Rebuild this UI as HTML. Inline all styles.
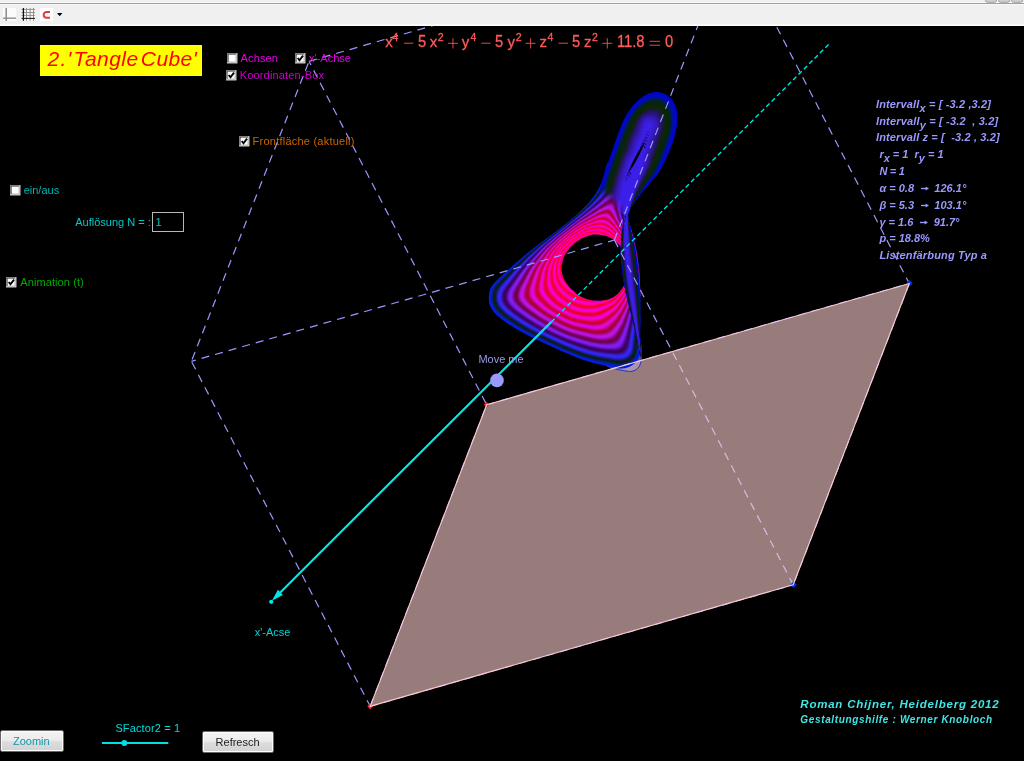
<!DOCTYPE html>
<html><head><meta charset="utf-8"><title>Tangle Cube</title>
<style>
html,body{margin:0;padding:0;background:#000;overflow:hidden}
body{width:1024px;height:761px;position:relative;font-family:"Liberation Sans",sans-serif;font-size:11px}
#tb{position:absolute;left:0;top:0;width:1024px;height:26px;z-index:5}
#view{position:absolute;left:0;top:0;width:1024px;height:761px;background:#000;overflow:hidden}
#gfx{position:absolute;left:0;top:0}
.t{position:absolute;white-space:nowrap;line-height:1;margin:0;padding:0}
.cb{position:absolute;width:11px;height:11px;box-sizing:border-box;background:#fff;border:1px solid;border-color:#808080 #f0f0f0 #f0f0f0 #808080;box-shadow:inset 1px 1px 0 #404040, inset -1px -1px 0 #d4d0c8}
.cb svg{position:absolute;left:1px;top:1px}
.btn{position:absolute;box-sizing:border-box;border:1px solid #686868;border-radius:2px;background:linear-gradient(#f4f4f4 0%,#ececec 45%,#dcdcdc 55%,#d2d2d2 100%);box-shadow:inset 0 0 0 1px #fcfcfc;text-align:center}
.bi{font-weight:bold;font-style:italic;color:#9999ff}
sub{font-size:11px;vertical-align:baseline;position:relative;top:4.3px}

#txt{position:absolute;left:0;top:0;width:1024px;height:761px;will-change:transform;background:transparent}

</style></head>
<body>
<div id="tb"><svg width="1024" height="26" style="position:absolute;left:0;top:0">
<rect x="0" y="0" width="1024" height="26" fill="#f0f0f0"/>
<rect x="0" y="2" width="1024" height="3" fill="#f8f8f8"/><rect x="0" y="3" width="1024" height="1" fill="#a0a0a0"/>
<rect x="0" y="24.4" width="1024" height="1.6" fill="#fdfdfd"/>
<rect x="3" y="8" width="13" height="13" fill="#fbfbfb"/>
<rect x="5.5" y="8" width="1.4" height="13" fill="#8a8080"/>
<rect x="3" y="17.5" width="13" height="1.3" fill="#8a8585"/>
<rect x="21.5" y="8" width="13.5" height="13" fill="#f8f8f8"/>
<g stroke="#888" stroke-width="0.9">
<line x1="26.5" y1="8" x2="26.5" y2="20.8"/><line x1="30.1" y1="8" x2="30.1" y2="20.8"/><line x1="33.5" y1="8" x2="33.5" y2="20.8"/>
<line x1="21.5" y1="9.4" x2="35" y2="9.4"/><line x1="21.5" y1="12.5" x2="35" y2="12.5"/><line x1="21.5" y1="15.4" x2="35" y2="15.4"/>
</g>
<line x1="23.4" y1="8" x2="23.4" y2="20.8" stroke="#101010" stroke-width="1.3"/>
<line x1="21.5" y1="18.4" x2="35" y2="18.4" stroke="#202020" stroke-width="1.1"/>
<rect x="40" y="8" width="13" height="13" fill="#fff"/>
<path d="M50,11.9 L46.6,11.9 A2.9,2.9 0 0 0 46.6,17.7 L50,17.7" fill="none" stroke="#e83a3a" stroke-width="2.0"/>
<polygon points="57,13 62.4,13 59.7,16.2" fill="#000"/>
<g fill="#d0d0d0" stroke="#909090" stroke-width="0.8"><rect x="985.5" y="-3" width="11" height="5.3" rx="2"/><rect x="998.6" y="-3" width="11" height="5.3" rx="2"/><rect x="1011.6" y="-3" width="11" height="5.3" rx="2"/></g>
</svg>
</div>
<div id="view">
<svg id="gfx" width="1024" height="761" viewBox="0 0 1024 761">
<polygon points="486.7,404.8 909.3,283.5 793.2,584.8 370.2,706.3" fill="#987b7b"/>
<defs><radialGradient id="fade" gradientUnits="userSpaceOnUse" cx="600" cy="211" r="27"><stop offset="0" stop-color="#000"/><stop offset="0.35" stop-color="#000"/><stop offset="1" stop-color="#fff"/></radialGradient><filter id="bl" filterUnits="userSpaceOnUse" x="458" y="44" width="254" height="356"><feGaussianBlur stdDeviation="3"/></filter><mask id="cm" maskUnits="userSpaceOnUse" x="478" y="84" width="214" height="296"><polygon points="560,60 700,60 700,372 634,372 632,365 629,349 625,334 621,317 617,300 614,285 612,270 611,256 611,243 613,232 617,225 622.5,217 621,208 614,199 603,191 585,179 560,170" fill="#fff" filter="url(#bl)"/></mask></defs>
<path d="M607,366.2 C614,368.6 622,370.8 629.5,371.5 C636,371.6 641.3,367 641.4,358 L641,345 L636,352 Z" fill="#c8b4dc" fill-opacity="0.45" stroke="#1c30d8" stroke-width="1"/>
<g id="ring" fill-rule="evenodd">
<path d="M622.5,368.5 618.8,368.5 610.0,366.8 591.7,362.5 582.1,359.5 563.2,351.8 543.9,343.0 526.4,334.5 516.5,329.0 509.2,324.5 504.4,321.2 497.5,315.8 493.8,312.0 490.8,307.6 489.2,303.5 488.7,298.5 489.2,292.5 490.5,288.6 492.2,285.4 495.9,281.2 514.5,264.2 525.2,255.0 538.2,244.8 555.2,232.3 570.8,220.1 579.0,212.8 588.3,203.5 594.7,195.5 597.9,190.2 600.0,186.2 603.6,177.0 606.0,167.1 607.8,162.7 611.2,159.2 614.2,157.8 618.5,156.7 622.0,156.4 627.0,156.7 632.4,158.2 636.8,160.2 641.3,163.0 646.8,167.2 649.2,169.8 651.8,173.6 652.5,177.0 651.8,180.0 650.2,182.5 646.5,187.3 641.9,192.2 632.5,204.2 629.7,209.0 628.2,214.0 628.2,217.5 628.8,220.5 634.8,242.6 636.5,251.0 638.5,263.8 639.5,273.0 640.3,291.2 640.1,316.5 640.4,318.2 640.1,337.0 640.5,345.0 640.5,352.0 640.0,354.8 638.8,358.0 637.5,360.3 635.0,363.0 632.2,365.2 629.0,366.9 624.8,368.2Z" fill="#001ee6"/>
<path d="M622.0,368.0 616.2,367.6 600.8,364.3 591.2,362.0 583.2,359.6 570.8,354.8 560.5,350.2 541.8,341.7 526.5,334.2 515.8,328.2 509.7,324.5 502.6,319.5 497.2,315.0 493.8,311.4 491.1,307.5 489.5,303.2 488.9,298.5 489.5,292.5 490.5,289.2 492.6,285.2 496.0,281.4 514.7,264.2 527.8,253.0 540.2,243.3 555.2,232.3 570.8,220.1 579.0,212.9 588.4,203.5 594.7,195.5 598.0,190.2 600.2,186.0 601.7,182.8 604.1,175.8 606.8,165.5 608.5,162.1 611.2,159.5 613.8,158.3 617.2,157.2 622.0,156.7 626.8,157.1 631.3,158.2 635.5,160.0 641.0,163.3 646.5,167.6 649.2,170.4 651.6,174.2 652.0,177.0 651.4,179.8 649.7,182.8 641.5,192.2 632.6,204.0 629.6,209.0 628.1,213.8 628.1,217.5 628.6,220.2 634.2,240.8 636.8,252.5 639.5,273.1 640.2,292.5 640.3,318.2 639.9,336.0 640.2,350.0 639.9,353.5 638.8,356.8 637.2,359.8 634.8,362.5 632.0,364.7 629.0,366.3 625.5,367.5Z" fill="#001ee6"/>
<path d="M622.8,367.0 616.5,366.7 601.0,363.5 590.2,360.9 582.2,358.4 573.2,355.0 559.8,349.2 543.2,341.6 529.0,334.7 519.5,329.5 511.2,324.5 503.2,319.0 497.8,314.4 494.3,310.8 491.8,307.0 490.3,303.0 489.8,298.2 490.3,292.8 491.6,288.5 494.0,284.7 498.1,280.2 516.0,263.6 526.9,254.0 538.2,245.0 555.2,232.4 570.8,220.2 579.0,213.0 588.6,203.5 594.8,195.8 600.5,186.2 603.5,179.2 607.2,166.8 609.0,162.8 611.0,160.7 614.0,159.1 617.8,158.1 622.2,157.7 626.5,158.0 630.8,159.1 635.0,160.8 639.5,163.4 644.8,167.3 648.3,170.8 650.5,174.0 651.1,176.8 650.6,179.2 649.0,182.2 640.2,192.9 631.0,205.6 628.8,210.1 627.8,213.8 627.8,216.5 628.4,220.2 632.5,234.8 636.2,250.0 637.7,258.8 639.4,273.2 640.0,292.8 639.3,336.0 639.5,349.8 639.0,353.2 638.1,356.2 636.6,359.0 634.8,361.2 632.5,363.3 629.5,365.1 626.2,366.3Z" fill="#031fdf"/>
<path d="M623.2,366.0 619.0,366.1 613.8,365.3 594.8,361.3 583.5,358.0 573.8,354.4 561.2,349.1 543.5,341.0 530.2,334.5 520.8,329.4 511.8,324.0 504.5,318.9 498.8,314.2 495.0,310.2 492.5,306.5 491.1,302.5 490.6,298.0 491.1,293.0 492.4,288.8 494.7,285.0 498.6,280.8 516.3,264.0 527.2,254.2 538.5,245.1 555.5,232.4 570.8,220.4 579.2,213.0 588.0,204.5 595.2,196.0 600.5,187.5 604.1,179.5 608.0,166.8 609.8,163.2 611.8,161.3 614.5,159.9 618.0,159.0 622.0,158.6 626.2,158.9 630.2,159.9 634.5,161.6 639.0,164.2 643.8,167.6 647.2,170.9 649.5,174.0 650.2,176.8 649.7,179.2 648.2,182.0 639.8,192.5 630.7,205.2 628.4,210.0 627.5,213.8 627.5,216.5 628.1,220.2 634.0,240.8 636.0,250.0 638.0,262.2 639.2,273.2 639.7,292.8 638.6,337.0 638.7,348.8 638.4,352.0 637.7,355.0 636.5,357.6 634.7,360.0 632.5,362.1 629.6,364.0 626.5,365.3Z" fill="#081fbb"/>
<path d="M621.5,365.3 615.8,364.8 599.2,361.5 590.8,359.5 582.2,356.8 572.2,353.1 559.2,347.5 542.8,339.9 529.8,333.5 520.6,328.5 511.8,323.0 504.6,318.0 499.2,313.5 495.4,309.5 493.2,306.0 491.9,302.2 491.5,297.8 491.7,294.2 492.4,291.0 493.5,288.2 495.1,285.8 498.6,281.8 514.1,266.8 524.7,257.0 535.8,247.6 571.0,220.4 582.1,210.8 589.2,203.8 595.7,196.0 601.5,186.8 604.8,179.5 608.7,167.2 610.5,163.8 612.3,162.0 615.0,160.7 618.5,159.8 622.2,159.6 626.2,159.9 630.2,160.9 634.2,162.5 638.5,165.0 643.1,168.2 646.5,171.4 648.5,174.2 649.2,177.0 648.7,179.2 647.1,182.0 639.2,192.1 630.8,204.2 628.5,208.5 627.3,212.5 627.1,215.2 627.5,219.0 633.5,239.8 635.7,249.0 637.3,258.8 638.8,270.8 639.3,279.2 639.4,292.8 638.0,337.0 638.0,348.5 637.6,352.2 636.8,355.0 635.5,357.5 633.5,360.0 631.0,362.1 628.0,363.7 624.8,364.8Z" fill="#0b1f82"/>
<path d="M622.2,364.3 616.2,364.0 601.0,361.1 591.8,359.0 583.2,356.4 573.8,352.9 561.8,347.9 545.6,340.5 531.3,333.5 521.8,328.3 513.2,323.1 505.8,317.9 500.2,313.4 496.5,309.5 494.1,306.0 492.8,302.2 492.3,297.8 492.5,294.2 493.2,291.2 494.2,288.8 495.8,286.2 499.2,282.2 515.3,266.2 525.0,257.2 536.0,247.9 572.1,219.8 582.2,211.0 589.5,204.0 596.6,195.5 602.0,187.0 605.4,179.8 609.4,167.8 611.1,164.5 612.9,162.8 615.2,161.6 618.5,160.8 622.0,160.5 626.0,160.8 629.9,161.8 633.8,163.3 638.0,165.7 642.3,168.8 645.6,171.8 647.6,174.5 648.2,177.0 647.8,179.0 646.5,181.5 638.7,191.8 630.2,204.2 628.1,208.5 626.9,212.8 626.8,215.5 627.2,219.0 634.7,245.5 636.2,252.8 638.0,264.8 638.8,273.2 639.2,281.8 638.9,303.5 637.4,336.5 637.2,348.2 636.5,353.0 634.6,357.2 631.5,360.6 627.2,363.0Z" fill="#0c1f48"/>
<path d="M622.8,363.3 617.0,363.2 604.8,361.0 594.2,358.8 584.3,356.0 574.6,352.5 562.2,347.4 534.7,334.5 524.4,329.0 516.0,324.0 507.9,318.5 501.8,313.7 497.8,309.8 495.1,306.0 493.7,302.2 493.1,297.8 493.4,294.5 494.0,291.5 495.1,288.8 496.7,286.2 500.2,282.2 516.6,265.8 526.2,256.8 537.2,247.2 563.8,226.8 575.1,217.5 584.3,209.5 590.5,203.4 597.2,195.5 602.6,187.0 606.0,180.0 610.2,168.2 611.8,165.2 613.5,163.5 615.8,162.4 618.8,161.7 622.0,161.4 625.8,161.7 629.5,162.6 633.2,164.1 637.1,166.2 641.4,169.2 644.8,172.2 646.6,174.8 647.2,177.0 646.8,179.0 645.5,181.4 637.8,191.8 629.8,204.0 627.6,208.5 626.5,212.8 626.4,215.8 626.9,219.0 634.0,243.2 635.8,251.5 637.3,261.2 638.8,275.8 638.9,295.0 636.4,347.8 635.9,352.0 634.2,356.1 631.3,359.5 627.3,362.0Z" fill="#0b1e1f"/>
<path d="M623.0,362.3 618.5,362.4 612.2,361.5 595.8,358.4 585.2,355.5 575.2,352.0 562.5,346.8 536.2,334.5 527.2,329.8 517.2,323.9 509.2,318.5 502.8,313.5 498.7,309.5 496.0,305.8 494.5,302.0 494.0,297.8 494.2,294.8 494.8,291.8 495.9,289.0 497.5,286.5 501.2,282.2 518.8,264.2 536.5,248.2 572.5,220.0 583.6,210.5 590.9,203.5 597.5,195.8 603.0,187.5 606.6,180.5 610.9,168.8 612.5,165.9 614.2,164.2 616.2,163.3 619.0,162.6 622.0,162.4 625.5,162.7 629.0,163.5 632.5,164.8 636.5,167.0 640.6,169.8 643.7,172.5 645.4,174.8 646.1,177.0 645.7,179.0 644.5,181.2 637.2,191.4 629.3,203.8 627.3,208.2 626.2,212.5 626.1,215.8 626.7,219.2 633.8,243.2 636.2,255.2 638.4,272.0 638.8,290.2 638.0,310.2 635.6,347.8 635.2,351.2 633.7,355.2 631.0,358.5 627.2,361.0Z" fill="#0b1d16"/>
<path d="M621.0,361.5 615.2,361.1 600.8,358.6 592.0,356.7 583.8,354.3 574.2,350.9 562.8,346.2 535.7,333.5 527.3,329.0 517.2,323.0 509.2,317.6 503.2,312.9 499.3,309.0 496.7,305.2 495.3,301.5 494.9,297.2 495.1,294.2 495.8,291.5 496.9,289.0 498.5,286.5 502.6,281.8 520.5,263.2 537.6,247.8 572.5,220.3 584.6,210.0 591.9,203.0 598.7,195.0 603.9,187.2 607.3,180.5 611.5,169.7 613.1,166.8 614.6,165.2 616.5,164.2 619.2,163.6 622.2,163.4 625.8,163.7 629.2,164.6 632.8,166.0 636.5,168.1 640.3,170.8 643.0,173.2 644.5,175.2 645.0,177.2 644.6,179.0 643.6,181.0 636.8,190.8 629.0,203.3 626.9,208.0 625.9,212.2 625.8,215.5 626.4,219.2 633.1,241.2 636.1,255.2 637.5,264.8 638.3,273.2 638.5,292.2 637.2,315.5 634.8,347.5 634.2,351.5 632.5,355.3 629.5,358.5 625.5,360.6Z" fill="#111c36"/>
<path d="M621.5,360.5 615.8,360.3 601.0,357.9 592.2,356.0 584.2,353.7 574.2,350.1 563.0,345.6 536.5,333.1 528.2,328.7 518.2,322.8 510.2,317.4 504.1,312.5 500.2,308.8 497.6,305.0 496.2,301.5 495.7,297.2 496.5,292.0 498.8,287.5 501.8,283.8 513.9,270.8 525.3,259.2 538.1,247.8 572.0,221.0 584.0,211.0 590.5,205.0 598.1,196.5 603.8,188.5 607.6,181.5 612.2,170.3 613.8,167.5 615.2,166.1 617.0,165.2 619.5,164.5 622.2,164.4 625.5,164.6 628.8,165.4 632.1,166.8 635.8,168.7 639.1,171.0 641.7,173.2 643.2,175.3 643.8,177.2 643.4,179.0 642.5,181.0 635.6,191.2 628.5,203.1 626.5,207.8 625.5,212.0 625.4,215.5 626.0,219.2 632.9,241.2 635.9,255.2 637.3,264.8 638.0,272.0 638.3,290.2 636.9,314.5 634.1,346.5 633.5,350.5 632.0,354.2 629.5,357.2 625.8,359.5Z" fill="#191d6e"/>
<path d="M621.5,359.5 615.5,359.4 601.2,357.1 592.2,355.2 585.2,353.2 575.2,349.7 563.3,345.0 538.8,333.5 529.2,328.5 520.0,323.0 511.8,317.5 505.2,312.5 501.1,308.5 498.6,305.0 497.1,301.2 496.6,297.2 497.5,292.0 499.9,287.2 503.7,282.8 517.9,267.2 528.1,257.2 539.1,247.2 572.3,221.0 584.4,211.0 591.0,205.0 598.8,196.5 604.2,189.0 608.2,182.0 613.0,171.0 614.5,168.4 615.8,167.1 617.5,166.1 619.8,165.5 622.2,165.4 625.2,165.6 628.5,166.4 635.2,169.5 638.5,171.7 640.8,173.8 642.2,175.8 642.5,177.5 642.3,179.0 641.3,181.0 634.8,191.3 628.1,202.8 626.2,207.2 625.2,211.8 625.1,215.5 625.7,219.2 632.4,240.2 635.6,254.0 637.8,270.8 638.2,278.5 638.2,288.5 636.6,313.2 632.7,349.8 631.3,353.5 629.0,356.3 625.5,358.5Z" fill="#2220ae"/>
<path d="M621.5,358.5 615.8,358.5 603.2,356.7 594.5,355.0 586.2,352.7 576.2,349.4 563.8,344.5 541.2,334.0 530.7,328.5 522.2,323.5 513.2,317.6 506.5,312.5 502.2,308.5 499.6,305.0 498.0,301.2 497.5,297.2 498.3,292.2 500.8,287.5 504.7,282.8 519.8,266.0 529.7,256.2 539.6,247.2 575.8,218.5 591.0,205.5 599.0,197.0 604.6,189.5 608.6,182.8 613.7,171.8 615.2,169.2 616.5,168.0 618.2,167.0 622.5,166.4 628.2,167.4 634.5,170.2 639.5,174.0 640.8,175.8 641.3,177.5 641.0,179.2 640.0,181.2 633.8,191.5 627.6,202.5 625.8,207.1 624.8,211.5 624.7,215.5 625.4,219.2 632.2,240.2 635.2,252.8 637.4,268.5 638.0,276.5 638.0,286.5 636.5,309.6 632.0,349.0 630.7,352.5 628.5,355.4 625.3,357.5Z" fill="#2a24e3"/>
<path d="M621.5,357.5 616.0,357.6 605.0,356.1 594.8,354.3 587.2,352.3 577.3,349.0 565.8,344.6 555.8,340.2 543.8,334.5 534.2,329.6 525.2,324.5 515.9,318.5 508.4,313.0 503.9,309.0 500.7,305.0 499.0,301.2 498.4,297.2 499.2,292.2 501.8,287.6 506.1,282.2 520.7,265.8 531.3,255.2 541.8,245.8 582.3,213.5 592.0,205.0 599.2,197.5 605.1,189.8 609.2,183.2 614.2,172.8 615.8,170.2 617.2,168.9 618.8,168.1 622.8,167.5 628.2,168.4 634.0,171.0 638.5,174.5 639.6,176.0 640.0,177.8 639.7,179.5 638.8,181.5 632.8,191.8 627.1,202.2 625.3,207.0 624.4,211.5 624.4,215.2 625.1,219.2 632.0,240.2 634.9,252.0 637.3,268.5 637.8,276.5 637.8,286.2 636.2,309.2 631.2,348.0 630.0,351.7 628.0,354.4 625.0,356.5Z" fill="#3128fd"/>
<path d="M619.0,356.8 613.2,356.4 600.8,354.6 592.2,352.9 584.2,350.6 564.2,343.2 555.8,339.5 540.2,332.0 530.8,326.9 521.8,321.5 513.6,316.0 507.3,311.0 503.5,307.3 501.1,304.0 499.8,300.5 499.4,296.8 500.3,292.0 503.0,287.2 515.1,272.8 523.3,263.8 533.4,253.8 542.2,245.8 583.4,213.0 593.6,204.0 599.8,197.5 605.9,189.8 609.9,183.5 614.9,173.8 616.5,171.2 617.8,170.0 619.2,169.2 623.0,168.5 627.8,169.3 633.0,171.6 637.0,174.6 638.1,176.0 638.6,177.5 638.5,179.2 637.6,181.5 629.8,195.8 626.2,203.0 624.5,208.2 623.9,213.0 624.2,216.5 624.9,219.8 631.9,240.2 634.7,252.0 637.1,268.5 637.6,276.5 637.6,286.2 637.0,296.2 635.3,313.5 630.3,348.0 628.8,351.8 626.5,354.3 623.2,356.0Z" fill="#3726f6"/>
<path d="M619.0,355.8 613.0,355.5 601.0,353.9 592.2,352.1 585.8,350.3 575.8,346.9 564.5,342.6 542.8,332.5 533.2,327.5 524.7,322.5 515.7,316.5 508.8,311.2 504.6,307.2 502.2,304.0 500.7,300.5 500.3,296.8 501.3,292.0 504.0,287.2 517.4,271.0 525.4,262.2 536.6,251.2 544.5,244.2 584.5,212.5 594.2,204.0 600.0,198.0 606.3,190.2 610.1,184.5 615.5,174.7 617.1,172.2 619.8,170.2 623.5,169.7 628.0,170.5 632.5,172.6 635.8,175.0 636.8,176.4 637.2,177.8 637.1,179.5 636.3,181.8 628.8,196.2 625.7,202.8 624.0,208.2 623.5,213.0 623.8,216.2 624.6,219.8 631.7,240.5 634.6,252.0 637.0,268.2 637.5,276.5 637.4,286.0 636.8,296.2 634.9,313.0 629.6,347.0 628.1,350.8 626.0,353.3 623.0,355.0Z" fill="#3a20d3"/>
<path d="M619.0,354.8 612.8,354.6 601.0,353.1 594.5,351.9 587.2,350.0 576.8,346.6 565.0,342.1 546.2,333.5 536.2,328.4 527.0,323.0 518.2,317.4 510.9,312.0 506.5,308.0 503.4,304.2 501.7,300.5 501.3,296.8 502.3,292.0 505.2,287.0 518.1,271.0 527.5,260.8 537.3,251.0 544.9,244.2 585.6,212.0 594.5,204.3 601.6,197.0 606.6,191.0 610.6,185.2 617.8,173.3 620.2,171.5 623.8,170.9 627.8,171.6 631.9,173.5 634.7,175.8 635.8,178.2 635.7,180.0 635.0,182.0 627.7,196.8 625.1,202.8 623.6,208.0 623.2,212.8 624.1,219.0 631.6,240.5 634.5,252.2 636.8,268.2 637.3,276.5 637.3,286.0 636.5,296.0 634.5,312.8 628.9,346.0 627.5,349.6 625.5,352.2 622.5,354.0Z" fill="#3b16a3"/>
<path d="M618.8,353.8 613.2,353.7 603.0,352.6 594.8,351.1 588.2,349.5 578.2,346.3 566.8,342.1 548.8,334.0 537.0,328.0 529.2,323.6 519.8,317.5 511.8,311.6 507.2,307.6 504.3,304.0 502.7,300.5 502.2,296.8 502.5,294.2 503.3,292.0 506.4,286.8 519.1,270.8 530.0,258.8 539.4,249.5 546.8,243.0 586.1,212.0 594.8,204.6 601.9,197.5 607.0,191.5 611.0,186.0 618.2,174.6 620.8,172.7 624.0,172.1 627.5,172.7 631.0,174.3 633.3,176.2 634.4,178.5 634.3,180.2 633.5,182.5 626.9,196.8 624.5,202.8 623.2,207.8 622.8,212.8 623.7,219.0 631.4,240.8 634.3,252.2 636.6,268.2 637.1,276.5 637.1,285.8 636.3,296.0 634.1,312.5 628.2,344.8 626.9,348.5 625.0,351.1 622.2,352.9Z" fill="#3a0c76"/>
<path d="M618.2,352.8 612.8,352.8 603.2,351.8 594.8,350.3 589.2,349.0 579.2,345.9 567.2,341.6 550.3,334.0 532.2,324.5 521.8,317.9 512.8,311.4 508.2,307.4 505.2,303.7 503.7,300.2 503.2,296.5 503.6,294.0 504.5,291.5 508.1,285.8 520.6,269.8 533.0,256.2 540.5,248.9 547.2,242.9 586.6,212.0 594.8,205.1 601.6,198.5 607.0,192.5 611.2,187.0 618.8,175.8 621.2,173.9 624.2,173.4 627.2,173.9 630.1,175.2 632.0,177.0 632.9,179.0 632.8,180.8 632.1,183.0 626.0,196.9 623.8,202.8 622.7,207.8 622.4,212.8 623.5,219.2 631.2,240.8 634.1,252.2 636.5,268.2 637.0,276.5 636.9,285.8 636.0,295.8 633.8,312.0 630.2,331.8 627.5,343.8 626.0,347.8 624.2,350.2 621.8,351.9Z" fill="#3a035d"/>
<path d="M618.0,351.8 613.5,351.9 606.5,351.4 599.8,350.5 591.2,348.7 581.8,346.0 570.5,342.1 563.2,339.2 554.2,335.2 540.8,328.5 533.2,324.3 523.2,318.0 514.8,312.0 509.8,307.7 506.4,303.8 504.7,300.2 504.2,296.5 504.6,294.0 505.6,291.2 510.1,284.2 523.8,266.8 536.0,253.8 541.5,248.4 549.1,241.8 587.5,211.7 594.9,205.5 601.9,199.0 607.5,193.0 619.2,177.1 621.8,175.3 624.5,174.8 627.2,175.3 629.7,176.8 631.0,178.5 631.3,180.5 630.5,184.0 625.2,196.8 623.2,202.8 622.1,208.8 622.1,214.2 623.4,220.0 631.1,241.0 633.8,251.5 636.3,268.0 636.8,276.5 636.7,285.8 635.8,295.8 633.4,311.8 629.7,330.8 627.0,342.3 625.5,346.4 623.8,349.0 621.2,350.8Z" fill="#3d005a"/>
<path d="M617.5,350.8 613.2,351.0 606.5,350.5 600.2,349.8 591.8,348.1 582.2,345.4 570.8,341.5 563.5,338.7 554.8,334.7 541.3,328.0 533.8,323.8 523.8,317.5 515.4,311.5 510.8,307.5 507.3,303.5 505.7,300.0 505.2,296.5 505.8,293.5 507.1,290.2 513.7,280.8 525.1,266.0 538.5,251.8 545.9,244.8 556.8,235.8 595.0,206.0 602.0,199.6 607.5,194.0 619.8,178.4 622.0,176.8 624.5,176.3 626.8,176.8 628.5,178.0 629.5,179.5 629.7,181.5 628.9,185.0 624.3,197.2 622.6,202.8 621.6,208.5 621.7,214.0 623.1,220.2 630.9,241.0 633.5,250.8 636.2,268.0 636.6,276.5 636.5,285.5 635.5,295.5 633.0,311.5 629.2,329.8 626.5,340.8 624.9,345.2 623.1,348.0 620.8,349.8Z" fill="#46046d"/>
<path d="M614.5,350.0 608.5,349.8 600.8,349.0 594.5,347.9 586.8,346.0 576.8,342.8 566.2,339.1 549.8,331.5 533.8,323.0 523.7,316.5 514.8,310.0 510.8,306.3 508.1,303.0 506.7,299.8 506.3,296.2 507.0,292.8 508.9,289.0 520.0,273.2 527.5,264.0 539.9,250.8 546.2,244.8 557.0,235.8 589.0,211.3 599.1,203.0 608.6,193.8 619.8,180.3 622.2,178.5 624.5,178.1 626.0,178.5 627.2,179.6 627.9,181.0 628.0,182.8 627.2,186.0 623.3,197.8 621.8,203.2 621.1,208.8 621.3,214.0 622.9,220.5 630.8,241.0 633.4,251.0 636.0,268.0 636.5,276.5 636.3,285.8 635.3,295.5 632.7,311.2 628.8,329.0 625.5,340.9 623.6,345.2 621.5,347.9 618.5,349.4Z" fill="#540c93"/>
<path d="M614.5,349.0 608.8,349.0 601.0,348.3 589.8,346.0 579.8,343.1 569.2,339.5 560.8,336.1 554.3,333.0 542.3,327.0 534.8,322.8 525.0,316.5 516.7,310.5 512.4,306.8 509.4,303.2 507.7,299.8 507.3,296.2 508.0,292.8 509.9,289.0 520.9,273.0 528.3,263.8 541.6,249.5 548.2,243.5 557.2,235.9 574.5,222.5 590.6,210.5 599.2,203.5 608.4,195.0 619.5,182.5 621.8,180.8 623.8,180.3 625.0,180.8 625.7,181.5 626.1,182.8 626.1,184.5 621.3,202.8 620.6,208.0 620.7,212.8 622.2,219.5 629.5,237.9 631.7,244.8 633.2,251.0 635.8,268.0 636.3,276.5 636.1,285.5 635.0,295.2 632.3,310.8 628.3,328.0 625.2,339.0 623.2,343.7 621.2,346.5 618.5,348.2Z" fill="#6415c1"/>
<path d="M614.2,348.0 609.5,348.1 603.0,347.7 590.8,345.5 581.2,342.8 570.5,339.3 564.2,336.8 555.5,332.9 542.8,326.5 535.5,322.4 526.3,316.5 518.0,310.5 513.4,306.5 510.7,303.5 508.9,300.0 508.3,296.2 509.1,292.8 510.8,289.0 521.6,273.0 528.9,263.8 542.1,249.5 548.5,243.5 559.8,234.2 599.4,204.0 607.8,196.5 618.8,185.2 620.8,183.7 622.5,183.2 623.3,183.5 623.8,184.2 624.1,186.8 620.5,203.8 620.1,208.8 620.3,213.0 621.9,219.8 629.0,237.1 631.5,244.8 632.9,250.2 635.7,268.0 636.1,276.5 635.9,285.2 634.8,295.2 632.0,310.4 627.9,327.0 624.8,337.5 622.7,342.5 620.5,345.5 618.0,347.2Z" fill="#741ce7"/>
<path d="M614.0,347.0 609.5,347.2 603.2,346.9 592.0,345.0 572.0,339.1 558.8,333.7 543.5,326.1 536.2,322.0 527.7,316.5 520.0,311.0 515.1,307.0 511.7,303.2 509.9,299.8 509.4,296.2 510.1,292.8 512.0,288.8 522.5,272.8 529.5,263.8 542.8,249.2 548.7,243.8 557.5,236.2 574.8,222.9 594.8,208.2 605.5,199.5 617.2,188.5 619.2,187.1 620.8,186.7 621.8,187.4 622.0,189.5 619.7,204.8 619.6,209.2 620.0,213.5 621.7,220.0 628.7,237.0 631.4,244.8 632.6,249.5 634.1,257.2 635.5,267.8 636.0,276.5 635.8,284.0 635.2,290.5 632.7,305.0 628.5,322.5 625.1,334.0 622.7,340.2 620.5,343.8 617.8,346.0Z" fill="#801ef9"/>
<path d="M611.2,346.3 600.8,345.8 594.5,344.8 587.2,343.0 567.5,336.7 553.7,330.5 543.8,325.5 536.3,321.2 527.2,315.3 519.2,309.5 515.0,305.7 512.5,302.8 510.9,299.5 510.5,296.0 511.2,292.5 513.2,288.2 524.3,271.2 531.4,262.2 543.2,249.2 550.5,242.5 563.2,232.0 578.2,220.5 599.3,205.2 615.5,191.6 617.5,190.3 618.8,190.0 619.8,190.5 620.2,192.5 619.0,205.5 619.1,209.8 619.6,213.8 621.9,221.5 629.7,240.2 632.3,249.0 633.9,257.2 635.4,267.8 635.8,276.5 635.6,284.0 634.3,294.8 631.3,309.5 627.1,325.5 623.7,335.5 621.1,341.0 618.8,343.9 615.8,345.5Z" fill="#841cf0"/>
<path d="M611.5,345.3 606.8,345.4 601.0,345.0 589.8,342.9 569.5,336.8 556.2,331.0 544.3,325.0 537.0,320.8 528.2,315.1 520.8,309.6 516.8,306.2 513.5,302.5 511.9,299.2 511.5,296.0 512.2,292.5 514.2,288.2 525.1,271.0 534.1,259.8 545.5,247.4 557.8,236.6 570.1,227.0 599.2,205.9 613.8,194.4 615.8,193.2 617.2,192.8 618.2,193.3 618.7,195.0 618.5,208.0 618.9,212.2 619.9,216.8 621.8,222.0 626.5,232.7 629.9,241.2 633.0,252.8 635.2,267.8 635.6,280.8 634.8,290.2 632.2,304.2 627.8,321.0 624.2,331.8 621.2,338.6 618.8,342.2 615.8,344.3Z" fill="#8115ce"/>
<path d="M611.2,344.3 606.5,344.5 601.0,344.2 591.8,342.7 572.8,337.2 559.7,332.0 545.0,324.6 538.7,321.0 531.2,316.3 523.2,310.5 517.8,306.0 514.5,302.3 513.0,299.2 512.6,296.0 513.2,292.5 515.1,288.2 525.8,271.0 534.6,259.8 545.8,247.5 558.0,236.8 575.0,223.5 594.7,209.8 611.8,197.1 614.2,195.6 615.8,195.1 617.0,195.8 617.5,197.2 618.0,209.2 619.7,217.5 628.2,237.4 632.0,249.0 634.8,265.0 635.5,278.8 634.8,288.8 632.0,303.5 629.9,311.8 624.9,327.8 621.5,336.0 618.8,340.5 615.8,343.0Z" fill="#790d9e"/>
<path d="M609.0,343.5 600.2,343.3 594.5,342.5 587.8,340.9 568.5,335.0 556.8,329.8 545.3,324.0 538.0,319.8 530.0,314.5 522.8,309.2 518.5,305.5 515.3,301.8 514.0,299.0 513.6,296.0 514.3,292.5 516.1,288.2 526.5,271.0 535.2,259.8 546.2,247.5 558.2,236.8 575.2,223.6 610.2,199.2 613.0,197.6 614.8,197.2 615.9,197.8 616.5,199.2 617.6,210.2 619.5,218.0 628.1,237.5 631.8,249.0 634.6,265.0 635.3,279.0 634.4,290.0 631.6,303.5 627.0,319.6 623.3,330.0 620.0,336.8 617.2,340.5 615.6,341.8 613.8,342.6Z" fill="#71066e"/>
<path d="M609.2,342.5 600.8,342.5 594.5,341.7 588.8,340.4 570.5,335.0 562.8,331.9 557.2,329.3 545.8,323.5 538.5,319.3 523.8,309.0 519.2,305.0 516.3,301.5 515.0,298.5 514.7,295.8 515.3,292.2 517.3,287.8 527.1,271.0 530.9,265.8 537.4,257.8 543.7,250.5 548.1,246.0 560.8,235.0 578.8,221.4 608.8,201.1 611.8,199.4 613.8,198.9 615.0,199.5 615.7,201.0 617.2,211.0 619.3,218.5 627.9,237.5 631.3,247.8 632.8,254.2 634.5,265.0 635.1,278.8 634.4,288.5 631.4,303.0 629.1,311.2 624.1,326.0 620.4,334.0 617.2,338.9 614.0,341.3Z" fill="#6d014e"/>
<path d="M607.0,341.8 601.0,341.7 594.8,340.9 582.8,338.0 569.0,333.8 560.8,330.3 554.1,327.0 539.0,318.8 530.5,313.0 523.2,307.5 519.9,304.5 517.1,301.0 516.0,298.2 515.7,295.5 516.4,292.0 518.2,287.8 527.9,270.8 531.4,265.8 538.3,257.2 543.9,250.8 548.5,246.0 561.2,235.0 578.8,221.7 607.2,202.9 610.8,201.0 612.8,200.5 614.0,200.9 614.9,202.2 617.1,213.0 619.0,218.8 627.6,237.5 630.5,245.4 632.4,253.2 634.3,264.8 635.0,278.8 634.0,289.8 631.0,303.0 626.3,318.2 622.5,328.0 618.8,335.0 615.8,338.8 612.2,340.8Z" fill="#700047"/>
<path d="M607.5,340.8 603.0,340.9 598.8,340.6 594.5,340.1 587.2,338.5 569.2,333.2 557.8,328.1 546.8,322.5 539.8,318.4 525.7,308.5 521.5,304.8 518.8,301.8 517.2,298.5 516.8,295.5 517.4,292.0 519.2,287.5 528.6,270.8 532.0,265.8 538.8,257.2 544.3,250.8 548.7,246.2 561.2,235.2 579.0,221.8 605.8,204.6 609.8,202.4 612.0,201.9 613.2,202.3 614.2,203.7 616.9,213.8 618.8,219.2 627.5,237.7 630.3,245.5 632.3,253.2 634.1,264.8 634.8,278.8 634.0,288.2 630.8,302.5 626.1,317.2 623.3,324.5 619.0,332.8 615.8,337.2 612.2,339.6Z" fill="#7c035b"/>
<path d="M605.2,340.0 600.8,340.0 594.5,339.3 577.8,335.1 567.0,331.6 561.2,329.1 553.1,325.0 539.8,317.6 531.6,312.0 524.8,306.7 521.7,303.8 519.0,300.2 518.1,297.8 517.8,295.2 518.5,291.8 520.3,287.2 529.2,270.8 532.6,265.8 539.3,257.2 544.5,251.0 549.0,246.2 561.5,235.3 579.0,222.1 602.8,207.1 608.5,203.9 611.5,203.2 612.8,203.7 613.8,205.1 617.8,217.8 627.3,237.8 630.2,245.5 632.2,253.5 634.0,264.8 634.6,278.8 633.8,288.2 630.5,302.2 625.8,316.6 622.9,323.8 618.5,331.9 614.8,336.7 613.0,338.0 610.8,339.1Z" fill="#8e0983"/>
<path d="M606.0,339.0 601.0,339.2 595.5,338.6 585.8,336.6 570.0,332.0 558.5,327.0 547.8,321.5 540.8,317.4 527.6,308.0 524.2,305.1 520.8,301.2 519.5,298.8 518.9,295.2 519.5,291.8 521.2,287.2 529.9,270.8 533.2,265.8 539.7,257.2 544.9,251.0 549.2,246.4 561.6,235.5 579.2,222.2 601.0,208.7 607.5,205.2 610.8,204.3 612.2,204.9 613.4,206.5 617.6,218.2 627.1,237.8 630.0,245.5 632.0,253.5 633.8,264.8 634.4,278.8 633.3,289.5 630.2,302.0 625.5,315.8 622.5,322.9 618.1,330.8 614.5,335.4 610.8,337.9Z" fill="#a10fb3"/>
<path d="M603.8,338.3 599.2,338.2 592.2,337.3 575.0,332.9 564.0,328.9 551.2,322.5 540.7,316.5 532.2,310.6 525.8,305.4 522.5,301.9 520.9,299.5 520.1,297.0 519.9,294.8 520.6,291.2 522.3,286.8 530.5,270.8 533.7,265.8 540.2,257.2 545.1,251.2 549.5,246.5 561.8,235.6 579.2,222.5 600.8,209.4 607.0,206.2 610.2,205.4 611.8,206.0 613.0,207.7 617.3,218.5 627.0,238.0 629.8,245.5 631.8,253.5 633.7,264.8 634.3,278.8 633.4,288.0 630.0,301.6 625.1,315.2 622.1,322.2 617.5,330.1 613.5,334.9 611.5,336.3 609.2,337.3Z" fill="#b213da"/>
<path d="M604.8,337.3 600.8,337.5 594.8,337.0 583.2,334.4 570.5,330.8 564.2,328.3 558.2,325.4 548.8,320.5 541.6,316.2 528.8,306.9 525.8,304.2 522.6,300.5 521.4,298.0 521.0,294.5 521.6,291.0 523.2,286.5 531.1,270.8 534.3,265.8 540.7,257.2 545.5,251.2 549.8,246.7 562.0,235.8 579.4,222.8 600.8,209.9 606.5,207.2 609.5,206.4 611.2,207.0 612.8,209.0 618.0,221.0 626.8,238.0 629.0,243.8 631.3,252.0 633.1,261.8 633.8,268.0 634.1,278.5 633.2,288.0 629.8,301.3 627.0,309.2 621.8,321.4 617.5,328.5 613.5,333.5 609.8,336.0Z" fill="#bd14eb"/>
<path d="M603.0,336.5 598.2,336.5 592.0,335.7 573.5,331.0 562.5,326.8 550.2,320.5 542.2,315.8 537.5,312.6 527.0,304.2 524.1,301.0 522.7,298.5 522.1,296.0 522.0,294.0 522.7,290.5 524.3,286.0 531.7,270.8 534.9,265.8 541.1,257.2 545.7,251.5 550.1,246.8 562.0,236.0 571.0,229.0 579.5,223.0 600.8,210.5 606.2,208.0 609.2,207.4 611.0,208.1 612.5,210.1 617.9,221.5 624.0,232.8 628.8,243.8 631.2,252.0 633.0,261.8 633.7,268.0 633.9,278.8 633.0,287.8 629.5,301.0 626.8,308.6 621.4,320.8 616.5,328.4 612.5,333.0 610.5,334.4 608.2,335.5Z" fill="#be12e0"/>
<path d="M603.8,335.5 600.8,335.7 594.5,335.3 583.2,333.0 571.0,329.5 564.8,327.1 559.4,324.5 549.8,319.5 542.8,315.3 530.8,306.5 527.5,303.5 524.8,300.2 523.4,297.5 523.0,294.2 523.5,290.8 525.1,286.2 532.4,270.8 535.4,265.8 541.6,257.2 546.0,251.6 550.2,246.9 562.2,236.1 571.2,229.1 579.5,223.2 598.0,212.4 605.0,209.2 608.8,208.3 610.8,209.1 612.5,211.5 617.8,222.0 623.7,232.8 628.7,243.8 631.0,252.0 632.8,261.8 633.5,268.0 633.8,278.5 632.8,287.8 629.2,300.8 626.4,308.2 621.0,320.0 616.5,327.0 612.2,331.9 608.5,334.3Z" fill="#b80ebc"/>
<path d="M602.0,334.8 597.2,334.8 592.0,334.2 573.2,329.6 563.0,325.6 551.2,319.5 543.2,314.8 538.5,311.5 528.9,303.8 526.7,301.2 525.1,298.8 524.3,296.8 524.0,293.8 524.6,290.2 526.1,285.8 533.0,270.8 536.0,265.8 542.0,257.2 546.3,251.8 550.6,247.0 562.4,236.2 571.2,229.3 579.8,223.4 598.0,212.9 604.5,210.0 608.2,209.2 610.4,210.0 612.2,212.4 623.5,232.9 626.5,238.9 628.6,244.0 630.9,252.2 632.7,261.8 633.4,268.0 633.6,278.8 632.6,287.8 629.0,300.5 626.0,308.2 620.8,319.2 616.0,326.2 611.5,331.2 607.2,333.7Z" fill="#b00889"/>
<path d="M600.5,334.0 591.8,333.3 580.8,330.9 571.8,328.4 563.3,325.0 551.0,318.6 543.8,314.3 539.1,311.0 529.8,303.3 527.5,300.8 526.1,298.5 525.2,296.2 525.0,293.5 525.6,290.0 527.1,285.2 533.7,270.5 537.7,264.0 544.3,254.8 552.2,245.7 559.8,238.7 565.2,234.2 579.8,223.7 597.8,213.5 604.2,210.7 608.0,210.0 610.2,211.0 612.2,213.6 623.2,232.9 627.9,242.8 630.2,250.0 632.5,261.5 633.2,268.0 633.4,278.8 632.4,287.5 628.7,300.2 625.8,307.7 620.4,318.5 615.0,326.1 610.5,330.7 606.2,333.0Z" fill="#a90357"/>
<path d="M601.5,333.0 596.5,333.1 592.0,332.6 573.8,328.3 563.8,324.5 551.8,318.3 544.2,313.8 539.6,310.5 530.6,303.0 528.4,300.5 526.9,298.0 526.2,296.0 526.0,293.0 526.6,289.5 528.1,284.8 534.4,270.2 538.2,264.0 544.8,254.8 552.5,245.8 560.0,238.8 565.5,234.3 580.0,223.8 597.8,214.0 603.8,211.5 607.5,210.8 608.8,211.1 610.0,211.8 612.2,214.7 623.0,233.0 627.7,242.8 630.1,250.0 632.3,261.5 633.1,268.0 633.3,278.5 632.2,287.5 628.4,300.0 625.5,307.2 620.0,318.0 615.0,324.8 610.5,329.4 606.5,331.8Z" fill="#a80135"/>
<path d="M599.8,332.3 594.8,332.2 591.5,331.7 580.8,329.4 572.5,327.2 564.0,323.8 551.8,317.5 544.8,313.3 540.2,310.0 531.3,302.5 529.2,300.0 527.8,297.5 527.1,295.5 527.0,292.5 527.7,288.8 529.3,283.8 533.4,273.8 535.6,269.2 538.7,264.0 545.2,254.8 552.9,245.8 560.1,239.0 565.6,234.5 580.0,224.1 597.8,214.4 603.5,212.2 607.2,211.6 609.8,212.6 612.5,216.1 622.9,233.2 627.5,242.8 629.9,250.0 632.2,261.5 632.9,268.0 633.1,278.8 632.0,287.3 628.2,299.8 625.0,307.3 619.8,317.2 614.5,324.1 609.5,329.0 605.0,331.3Z" fill="#ac002f"/>
<path d="M601.2,331.3 596.2,331.4 592.0,331.0 574.5,327.1 564.2,323.2 552.8,317.3 545.3,312.8 540.8,309.5 532.3,302.2 530.2,299.8 528.8,297.2 528.1,295.0 528.0,292.2 528.6,288.5 530.3,283.2 534.2,273.2 536.2,269.2 539.2,264.0 545.4,255.0 553.0,246.0 560.2,239.1 565.8,234.6 580.2,224.2 597.8,214.9 603.0,212.9 606.8,212.3 608.2,212.6 609.5,213.4 612.5,217.0 622.6,233.2 627.3,242.8 629.8,250.2 632.0,261.5 632.8,268.0 632.9,278.5 631.9,286.8 630.2,293.0 625.9,304.2 621.0,314.0 616.2,320.8 610.5,326.9 606.5,329.7Z" fill="#b40247"/>
<path d="M599.5,330.5 594.8,330.5 591.5,330.2 580.8,328.0 573.0,326.0 564.5,322.6 552.8,316.5 545.8,312.2 541.2,308.9 533.0,301.8 531.0,299.2 529.6,296.8 529.0,294.5 528.9,291.8 529.6,287.8 531.4,282.2 534.9,273.0 537.3,268.2 539.7,264.0 545.8,255.0 553.4,246.0 560.5,239.2 565.9,234.8 580.2,224.5 597.8,215.3 602.8,213.5 606.5,213.0 608.2,213.5 609.7,214.5 613.5,219.3 622.5,233.6 627.2,243.0 629.6,250.2 631.9,261.5 632.6,268.0 632.7,278.8 631.6,287.2 627.7,299.2 624.5,306.4 619.1,316.0 613.8,322.5 608.8,327.1 604.8,329.4Z" fill="#c00575"/>
<path d="M600.8,329.5 595.8,329.7 592.0,329.5 575.0,325.8 565.0,322.1 553.5,316.2 546.2,311.7 541.8,308.4 533.9,301.5 531.8,298.8 530.6,296.5 529.9,294.0 529.9,291.2 530.7,287.0 532.6,280.8 535.5,273.0 538.3,267.2 546.8,254.2 553.5,246.2 560.5,239.5 566.0,235.0 571.9,230.5 580.3,224.8 596.8,216.2 602.5,214.2 606.0,213.7 607.8,214.1 609.2,215.0 613.2,219.7 622.3,233.8 627.0,242.9 629.5,250.2 631.2,258.5 632.4,267.8 632.7,276.5 631.8,285.2 629.8,292.6 625.3,303.8 620.6,312.5 615.8,319.2 610.0,325.0 605.2,328.1Z" fill="#cd08aa"/>
<path d="M599.2,328.8 594.8,328.9 591.5,328.6 580.8,326.5 573.5,324.7 565.2,321.5 553.8,315.5 546.8,311.2 542.2,307.8 534.6,301.0 532.6,298.2 531.5,296.0 530.8,293.8 530.8,290.8 531.7,286.2 533.9,279.2 536.9,271.2 539.1,266.8 547.7,253.5 553.8,246.2 560.8,239.6 566.2,235.0 572.0,230.7 580.5,224.9 596.5,216.8 602.2,214.8 605.8,214.4 607.5,214.7 609.0,215.6 613.0,220.1 621.0,232.0 626.8,243.0 629.3,250.2 631.6,261.5 632.3,268.0 632.4,278.5 631.3,286.5 629.5,292.5 625.0,303.5 620.2,312.1 615.2,318.6 609.0,324.6 604.8,327.3 601.2,328.5Z" fill="#d80ad4"/>
<path d="M597.5,328.0 594.5,328.1 589.5,327.5 579.8,325.6 573.8,324.1 565.5,320.9 554.2,315.0 547.2,310.7 543.0,307.5 535.6,300.8 533.5,298.0 532.4,295.8 531.7,293.2 531.7,290.2 532.7,285.2 534.9,278.2 537.5,271.0 539.8,266.5 548.4,253.0 554.0,246.4 560.9,239.8 566.3,235.2 572.0,230.9 580.5,225.2 596.2,217.3 601.0,215.6 605.5,215.0 607.2,215.4 609.0,216.4 612.9,220.8 620.9,232.2 626.6,243.0 629.2,250.5 631.4,261.5 632.2,268.0 632.2,278.8 631.0,286.9 626.9,298.5 623.5,305.6 618.2,314.0 612.5,320.4 607.0,325.0 603.0,327.0 600.8,327.7Z" fill="#de0ae6"/>
<path d="M595.5,327.3 592.0,327.1 586.8,326.3 574.0,323.5 565.8,320.3 552.0,312.9 543.2,306.7 535.9,299.8 534.3,297.5 533.2,295.0 532.6,292.8 532.7,289.8 533.6,284.8 535.9,277.2 538.1,271.0 540.4,266.2 548.6,253.2 554.3,246.5 561.0,240.0 566.5,235.4 572.2,231.0 580.8,225.4 596.2,217.7 601.0,216.1 605.2,215.6 607.2,216.1 609.0,217.2 614.2,223.2 621.8,234.2 626.6,243.2 629.0,250.5 631.3,261.5 632.0,268.0 632.1,278.8 631.6,283.2 630.5,288.0 626.7,298.2 623.2,305.2 617.9,313.5 612.2,319.5 606.5,324.3 603.2,325.9 601.0,326.7Z" fill="#dd09da"/>
<path d="M597.8,326.3 594.5,326.5 590.2,326.1 580.8,324.4 574.5,322.9 566.0,319.7 555.2,314.0 548.2,309.6 544.0,306.4 537.2,300.0 535.3,297.2 534.2,295.0 533.5,292.2 533.6,289.2 534.5,284.2 536.7,276.8 538.7,271.0 540.9,266.2 549.0,253.2 554.6,246.5 561.2,240.0 566.7,235.5 572.2,231.3 580.8,225.6 584.8,223.5 596.2,218.1 601.0,216.6 604.8,216.2 606.8,216.6 608.8,217.7 611.0,219.9 614.0,223.5 621.7,234.5 626.4,243.2 628.9,250.5 631.1,261.5 631.8,268.0 631.9,278.5 630.7,286.2 628.8,292.2 624.2,302.5 619.4,310.5 614.2,316.6 607.5,322.5 603.0,325.0 600.8,325.8Z" fill="#d907b3"/>
<path d="M596.5,325.5 592.2,325.5 588.8,325.1 574.8,322.3 566.2,319.0 555.7,313.5 548.8,309.1 544.5,305.8 537.9,299.5 536.0,296.8 535.0,294.5 534.4,292.0 534.5,288.8 535.4,283.8 537.6,275.8 539.2,271.0 541.4,266.2 549.4,253.2 556.2,245.2 561.3,240.2 567.0,235.5 574.2,230.2 581.0,225.8 585.0,223.6 596.2,218.5 601.0,217.1 604.8,216.8 606.8,217.3 608.8,218.5 614.0,224.0 621.5,234.7 626.2,243.2 628.8,250.7 631.0,261.5 631.7,268.0 631.7,278.8 630.5,286.2 628.5,292.2 624.0,302.2 619.0,310.2 614.0,315.9 606.5,322.2 601.0,324.8Z" fill="#d4047d"/>
<path d="M595.5,324.8 592.0,324.7 587.2,324.1 575.0,321.6 566.5,318.4 553.5,311.4 549.1,308.5 544.8,305.0 538.2,298.5 536.8,296.2 535.8,293.8 535.3,291.5 535.3,288.2 536.3,283.0 538.4,275.2 539.8,271.0 541.9,266.2 549.6,253.5 556.3,245.5 561.5,240.4 567.1,235.8 574.5,230.3 581.0,226.1 585.2,223.8 596.2,219.0 601.0,217.6 604.5,217.4 606.5,217.8 608.5,219.0 613.8,224.3 621.3,234.8 626.1,243.5 628.6,250.8 630.8,261.5 631.5,268.0 631.6,278.8 630.3,286.2 627.8,293.3 623.5,302.2 618.0,310.6 613.5,315.5 606.2,321.3 601.0,323.9Z" fill="#d1024a"/>
<path d="M597.0,323.8 594.5,324.0 589.5,323.7 580.5,322.2 575.2,321.0 567.0,317.9 556.6,312.5 550.0,308.2 547.0,305.9 543.1,302.5 539.8,299.0 537.7,296.0 536.8,294.0 536.1,291.0 536.2,288.0 537.1,282.8 539.2,274.8 540.3,271.0 542.4,266.2 550.0,253.5 556.6,245.5 561.7,240.5 567.2,235.9 574.5,230.5 581.2,226.2 585.2,224.1 596.2,219.4 600.8,218.1 604.0,217.9 606.2,218.4 608.2,219.5 613.5,224.6 620.0,233.2 625.8,243.2 628.4,250.8 630.2,259.0 631.4,267.8 631.5,276.5 630.5,284.5 628.1,291.8 623.4,301.8 618.8,308.9 614.1,314.0 606.5,320.1 601.0,323.0Z" fill="#d00029"/>
<path d="M596.2,323.0 592.2,323.2 588.8,322.8 575.8,320.4 567.2,317.3 557.1,312.0 550.5,307.7 547.5,305.3 543.7,302.0 540.5,298.5 538.5,295.5 537.6,293.5 537.0,290.7 537.0,287.5 537.9,282.2 539.9,274.2 542.9,266.2 550.2,253.8 556.8,245.7 561.8,240.8 567.4,236.0 574.6,230.8 581.2,226.5 585.5,224.3 596.2,219.8 600.8,218.6 603.8,218.5 606.0,218.9 608.0,220.0 610.0,221.5 613.5,225.2 619.8,233.3 625.7,243.5 628.3,250.8 630.5,261.5 631.2,268.0 631.2,278.5 630.0,285.8 627.9,291.8 623.1,301.5 618.5,308.4 614.5,312.8 606.5,319.2 601.0,322.0Z" fill="#d30026"/>
<path d="M595.5,322.3 592.0,322.4 587.5,321.9 575.8,319.8 567.5,316.7 555.0,309.9 550.7,307.0 546.5,303.5 540.8,297.5 539.3,295.0 538.3,292.5 537.8,290.2 537.9,287.0 538.8,281.2 540.7,273.2 543.5,266.0 550.5,253.8 554.1,249.0 557.1,245.8 562.0,240.8 567.5,236.2 574.8,230.9 581.3,226.8 585.5,224.6 596.0,220.3 600.8,219.1 603.5,219.0 605.8,219.4 608.0,220.6 613.2,225.4 619.6,233.5 625.5,243.6 628.2,251.0 630.3,261.5 631.1,268.0 631.1,278.5 629.8,285.8 627.6,291.8 622.8,301.2 618.2,307.9 616.2,310.2 612.8,313.5 605.2,319.0 600.8,321.2Z" fill="#d80141"/>
<path d="M594.8,321.5 591.8,321.5 584.8,320.8 574.9,318.8 567.8,316.1 555.5,309.4 551.2,306.5 547.1,303.0 541.5,297.0 540.0,294.5 539.1,292.0 538.6,289.8 538.7,286.5 539.5,281.2 541.3,273.2 544.0,266.0 550.7,254.0 554.5,249.0 557.2,245.9 562.1,241.0 567.8,236.3 574.8,231.2 581.5,226.9 585.8,224.8 596.0,220.6 600.8,219.6 603.2,219.5 605.8,220.0 608.0,221.2 611.2,223.9 614.0,226.8 620.6,235.5 625.4,243.8 628.0,251.0 630.2,261.5 630.9,268.0 630.9,278.5 629.6,285.8 627.4,291.5 622.6,301.0 618.0,307.4 616.0,309.8 612.5,312.8 605.0,318.2 600.8,320.3Z" fill="#df0371"/>
<path d="M592.5,320.8 581.8,319.6 574.0,317.8 568.0,315.4 555.2,308.4 551.8,306.0 547.6,302.5 542.2,296.5 540.9,294.2 539.8,291.2 539.4,289.2 539.6,285.0 541.9,273.0 544.4,266.0 551.0,254.1 554.6,249.2 557.7,245.8 562.2,241.2 567.8,236.5 575.0,231.3 581.5,227.2 585.8,225.1 596.0,221.0 600.8,220.0 603.2,220.0 605.8,220.6 608.0,221.8 611.0,224.2 614.0,227.2 620.5,235.7 625.2,243.8 627.8,251.0 630.0,261.5 630.8,268.0 630.7,278.8 630.2,282.5 628.9,287.2 624.8,296.5 619.8,304.4 615.8,309.2 609.2,314.4 603.0,318.4 598.2,320.1Z" fill="#e604a8"/>
<path d="M595.5,319.8 592.0,320.0 588.0,319.7 577.0,317.9 568.5,314.9 559.0,309.9 552.0,305.2 547.4,301.2 543.6,297.0 540.9,292.0 540.2,289.0 540.2,285.8 542.5,273.0 544.9,266.0 551.3,254.2 554.9,249.2 557.8,246.0 562.5,241.3 568.0,236.6 575.0,231.5 581.8,227.3 586.2,225.2 596.0,221.4 600.5,220.5 602.8,220.5 605.2,221.0 607.8,222.2 610.8,224.5 613.8,227.5 620.2,235.8 625.0,243.8 627.7,251.0 629.6,259.5 630.6,267.8 630.7,276.5 629.6,284.0 627.7,289.5 624.4,296.5 619.2,304.4 615.5,308.7 613.5,310.5 606.5,315.5 601.0,318.4Z" fill="#eb05d3"/>
<path d="M595.0,319.0 591.8,319.2 585.5,318.7 575.8,316.9 568.7,314.2 556.8,307.8 552.8,304.9 548.8,301.4 543.7,295.8 542.4,293.2 541.4,290.5 541.0,288.5 541.1,284.5 543.0,273.0 545.4,266.0 551.5,254.5 555.1,249.5 558.2,246.0 562.8,241.3 568.2,236.8 575.1,231.8 581.8,227.6 593.0,222.8 598.0,221.3 602.5,221.0 605.0,221.5 607.5,222.6 610.7,225.0 613.5,227.7 620.1,236.0 624.8,243.8 627.6,251.2 629.4,259.5 630.5,267.8 630.6,276.5 629.6,283.2 627.6,289.2 624.2,296.2 619.0,304.0 615.2,308.2 613.2,309.9 606.5,314.6 601.0,317.6Z" fill="#ee05e4"/>
<path d="M594.8,318.3 591.8,318.4 585.2,317.9 576.1,316.2 569.0,313.7 557.3,307.2 553.2,304.4 549.2,300.9 544.4,295.2 543.2,293.0 542.2,290.0 541.8,288.0 541.8,284.0 543.6,273.0 545.8,266.0 551.9,254.5 555.4,249.5 559.0,245.5 562.9,241.5 568.2,237.0 575.2,231.9 582.0,227.8 587.2,225.4 596.0,222.2 600.5,221.4 602.5,221.5 605.2,222.1 607.8,223.4 610.5,225.4 613.5,228.2 620.0,236.2 624.7,244.0 627.4,251.2 629.3,259.5 630.3,267.8 630.4,276.5 629.7,282.2 628.2,287.1 624.0,296.0 618.9,303.5 615.0,307.8 606.5,313.8 601.0,316.7Z" fill="#ee04d6"/>
<path d="M594.2,317.5 590.5,317.6 583.2,317.0 575.2,315.3 569.2,313.0 557.8,306.8 553.8,303.9 550.0,300.5 545.2,295.0 543.9,292.5 543.0,289.8 542.5,287.8 542.5,283.5 544.6,271.0 547.2,264.0 551.1,256.5 554.1,251.8 557.0,248.0 562.5,242.2 568.2,237.2 573.2,233.5 582.1,228.0 587.2,225.7 596.0,222.6 600.5,221.9 602.5,221.9 605.0,222.5 607.5,223.7 610.2,225.7 613.2,228.4 619.8,236.3 624.5,244.0 627.2,251.2 629.1,259.5 630.2,267.8 630.2,276.5 629.5,282.2 628.1,287.0 623.8,295.8 618.8,303.0 614.8,307.3 606.5,313.0 600.8,316.0Z" fill="#ec03ad"/>
<path d="M593.0,316.8 583.5,316.3 575.5,314.6 569.5,312.4 561.5,308.2 558.0,306.0 554.2,303.3 550.3,299.8 545.9,294.5 544.2,291.0 543.3,287.8 543.3,282.2 545.1,271.0 547.7,263.8 551.8,255.8 554.4,251.8 557.3,248.0 562.8,242.2 568.5,237.3 573.2,233.8 582.2,228.2 593.0,223.8 597.8,222.6 602.2,222.4 604.8,223.0 607.5,224.3 613.1,228.8 619.6,236.5 624.4,244.2 627.1,251.5 629.3,261.5 630.0,268.0 629.9,278.5 628.5,285.2 626.0,291.0 621.0,299.4 616.6,304.8 612.5,308.4 603.2,314.0 598.5,315.8Z" fill="#ea0277"/>
<path d="M592.8,316.0 583.8,315.6 575.8,314.0 570.0,311.9 566.8,310.3 561.6,307.5 556.2,303.9 550.2,298.5 547.3,295.0 545.8,292.5 544.8,290.2 544.0,287.0 544.1,280.8 545.6,270.8 547.2,266.0 549.9,260.2 552.6,255.0 556.0,250.0 563.1,242.2 568.6,237.5 573.5,233.9 582.2,228.5 586.2,226.6 593.0,224.2 597.8,223.0 602.2,222.9 604.8,223.5 607.5,224.8 613.0,229.1 619.5,236.7 624.2,244.2 627.0,251.5 629.1,261.5 629.9,268.0 629.7,278.5 628.3,285.0 625.8,290.8 623.4,295.2 620.8,299.2 616.5,304.2 612.2,307.9 603.0,313.3 598.0,315.1Z" fill="#e90144"/>
<path d="M592.8,315.3 584.0,314.9 576.0,313.4 570.2,311.3 567.0,309.6 562.1,307.0 556.8,303.4 550.6,297.8 547.7,294.2 546.3,291.8 544.7,286.8 544.8,280.2 546.1,270.8 547.6,266.0 550.7,259.2 553.0,255.0 556.4,250.0 563.2,242.4 568.8,237.7 573.5,234.1 582.5,228.6 593.0,224.5 597.8,223.4 601.2,223.2 604.0,223.7 606.8,224.9 609.8,226.8 612.8,229.3 619.2,236.8 624.0,244.2 626.8,251.5 628.7,259.8 629.7,267.8 629.7,276.5 628.6,283.5 625.7,290.5 623.2,295.0 620.5,298.9 616.2,303.9 612.0,307.4 603.0,312.5 598.0,314.3Z" fill="#ea0025"/>
<path d="M592.8,314.5 583.2,314.1 579.2,313.5 575.0,312.3 570.5,310.6 564.2,307.4 556.5,302.3 550.7,296.8 548.2,293.5 547.0,291.2 545.4,286.2 545.5,279.2 546.8,270.2 548.0,266.0 551.6,258.2 553.6,254.5 556.7,250.0 563.5,242.5 569.0,237.8 573.7,234.2 582.5,228.9 586.5,227.1 593.0,224.9 597.5,223.8 601.0,223.6 603.8,224.1 606.8,225.4 609.5,227.1 612.7,229.8 619.1,237.0 623.8,244.2 626.6,251.5 628.6,259.8 629.5,267.8 629.6,276.5 628.8,281.8 627.2,286.7 623.0,294.8 618.0,301.5 613.8,305.5 605.0,310.8 600.2,312.9 595.0,314.3Z" fill="#ec0023"/>
<path d="M592.5,313.8 586.5,313.7 581.5,313.2 573.5,311.1 570.8,310.0 563.2,306.1 556.5,301.4 552.5,297.6 550.3,295.0 548.8,293.0 547.1,289.5 546.2,286.2 545.9,283.2 546.3,276.8 547.0,271.0 548.4,266.2 552.0,258.1 553.8,254.8 556.8,250.2 563.8,242.5 569.0,238.0 573.8,234.5 582.5,229.2 586.5,227.4 593.0,225.2 597.5,224.2 601.0,224.1 603.8,224.6 606.8,225.8 609.5,227.6 612.5,230.0 617.7,235.5 623.6,244.2 626.5,251.8 628.5,260.0 629.4,267.8 629.4,276.5 628.6,281.8 627.1,286.5 622.8,294.6 617.8,301.1 613.5,305.1 605.0,310.0 600.0,312.2 595.0,313.5Z" fill="#ee0040"/>
<path d="M592.8,313.0 587.0,313.0 581.8,312.5 573.8,310.4 571.0,309.4 563.8,305.6 557.0,300.9 550.9,294.5 549.5,292.6 547.7,289.0 546.8,285.8 546.6,282.8 547.0,275.2 547.5,271.0 548.9,266.0 553.7,255.5 558.3,248.8 564.0,242.6 569.2,238.1 573.8,234.7 582.8,229.3 586.8,227.6 593.0,225.5 597.5,224.6 601.0,224.5 603.8,225.1 606.5,226.2 609.2,227.8 612.3,230.2 617.5,235.7 623.5,244.5 626.4,251.8 628.3,260.0 629.2,267.8 629.2,276.5 628.5,281.8 626.9,286.5 622.5,294.4 617.5,300.8 613.2,304.7 605.0,309.3 600.5,311.3 595.0,312.8Z" fill="#f00171"/>
<path d="M592.8,312.3 587.0,312.3 582.0,311.8 574.0,309.8 571.2,308.7 564.2,305.1 557.4,300.2 551.5,294.0 550.2,292.2 548.4,288.5 547.5,285.5 547.2,282.5 547.7,273.2 549.3,266.0 553.9,255.8 558.7,248.8 564.2,242.7 569.4,238.2 574.0,234.8 582.8,229.6 586.8,227.9 593.0,225.9 597.5,225.0 600.8,224.9 603.5,225.5 606.5,226.7 612.2,230.6 617.2,235.8 623.3,244.5 626.2,251.8 628.2,260.0 629.1,267.8 629.1,276.5 628.3,281.5 626.7,286.2 622.3,294.2 617.3,300.5 613.0,304.2 605.0,308.6 600.5,310.6 595.0,312.0Z" fill="#f201a7"/>
<path d="M592.8,311.5 587.2,311.6 582.5,311.2 577.8,310.3 574.0,309.1 564.8,304.6 557.9,299.8 552.0,293.5 549.1,288.2 548.1,285.0 547.8,282.0 548.2,273.0 549.8,266.0 554.3,255.8 558.8,249.0 564.5,242.8 569.5,238.4 574.0,235.1 583.0,229.8 587.0,228.1 593.0,226.2 597.5,225.3 600.8,225.3 603.5,225.9 606.5,227.1 612.0,230.8 617.1,236.0 623.2,244.7 626.1,252.0 628.0,260.2 628.9,267.8 628.9,276.5 628.2,281.5 626.5,286.2 622.1,294.0 617.2,300.0 612.9,303.8 606.5,307.3 600.8,309.8 595.0,311.3Z" fill="#f300d0"/>
<path d="M593.0,310.8 587.8,310.9 582.8,310.5 578.0,309.6 574.5,308.5 572.0,307.6 565.2,304.1 558.4,299.2 552.8,293.2 549.8,287.9 548.8,284.8 548.5,281.8 548.7,273.0 550.2,266.0 554.5,256.0 559.1,249.0 564.5,243.0 569.8,238.5 574.2,235.2 583.0,230.0 587.0,228.4 593.0,226.5 597.5,225.7 600.8,225.8 603.5,226.4 606.5,227.6 612.0,231.2 617.0,236.2 623.1,244.8 626.0,252.0 627.9,260.2 628.8,267.8 628.8,276.5 628.0,281.5 626.3,286.2 621.9,293.8 617.0,299.7 612.8,303.3 606.5,306.7 600.8,309.1 595.0,310.6Z" fill="#f400e0"/>
<path d="M593.2,310.0 588.2,310.2 583.0,309.9 578.2,309.0 575.0,308.0 572.2,306.9 565.8,303.6 559.0,298.8 553.4,292.8 550.4,287.5 549.4,284.5 549.1,281.5 549.2,273.0 550.6,266.0 554.8,256.0 559.2,249.2 564.8,243.1 569.8,238.8 574.2,235.5 583.2,230.2 587.2,228.6 593.0,226.8 597.5,226.1 600.8,226.2 603.5,226.8 606.5,228.0 611.8,231.4 616.8,236.3 622.9,244.8 625.8,252.0 627.7,260.2 628.6,267.8 628.6,276.5 627.8,281.2 626.2,286.0 621.8,293.5 617.0,299.2 612.5,302.9 606.8,305.9 600.8,308.4Z" fill="#f400d1"/>
<path d="M592.0,309.5 586.8,309.5 581.5,309.0 574.8,307.2 566.2,303.1 559.4,298.2 555.7,294.5 553.5,291.7 550.8,286.4 550.0,284.0 549.6,280.2 549.9,271.0 551.7,264.0 555.4,255.5 559.5,249.2 564.5,243.6 567.2,241.1 574.5,235.6 583.2,230.5 587.2,228.8 593.0,227.2 597.5,226.5 600.8,226.6 603.5,227.2 606.5,228.4 611.6,231.8 616.6,236.5 622.8,245.0 625.6,252.0 627.6,260.2 628.5,267.8 628.4,276.5 627.7,281.2 625.9,286.0 621.5,293.4 616.8,299.0 612.2,302.6 606.5,305.5 600.8,307.7 594.8,309.2Z" fill="#f500a8"/>
<path d="M592.5,308.8 587.0,308.8 581.8,308.4 575.2,306.6 566.8,302.6 560.0,297.8 556.2,294.0 554.0,291.1 551.3,286.0 550.6,283.8 550.2,279.8 550.4,271.0 552.1,264.0 555.8,255.5 559.8,249.2 564.7,243.8 567.5,241.2 574.5,235.8 583.5,230.6 587.5,229.0 593.0,227.5 597.5,226.8 600.8,227.0 606.2,228.7 611.5,232.0 616.5,236.8 622.6,245.0 625.5,252.2 627.5,260.5 628.3,267.8 628.3,276.5 627.5,281.2 625.8,285.8 621.2,293.2 616.5,298.7 612.0,302.2 606.5,304.9 600.8,307.1Z" fill="#f60072"/>
<path d="M592.8,308.0 587.5,308.2 582.0,307.7 575.5,306.0 567.2,302.1 560.5,297.2 554.6,290.8 552.0,285.8 551.2,283.5 550.7,279.5 550.8,271.0 552.5,264.0 555.9,255.8 560.0,249.4 564.8,244.0 567.5,241.5 574.5,236.1 583.5,230.9 587.5,229.3 593.0,227.8 597.5,227.2 600.8,227.4 606.2,229.2 611.3,232.2 616.2,236.8 622.5,245.2 625.4,252.2 627.3,260.5 628.2,267.8 628.1,276.5 627.3,281.2 625.6,285.8 621.1,293.0 616.5,298.2 612.0,301.7 607.5,303.9 600.8,306.5Z" fill="#f80041"/>
<path d="M590.5,307.5 582.2,307.1 575.8,305.4 567.8,301.6 560.9,296.8 555.2,290.4 552.6,285.5 551.8,283.2 551.4,280.2 551.3,271.0 552.9,264.0 556.3,255.8 560.3,249.5 565.0,244.1 567.8,241.6 574.8,236.2 583.8,231.1 587.8,229.5 593.0,228.1 597.5,227.6 600.8,227.8 606.0,229.4 611.2,232.6 616.1,237.0 622.3,245.2 625.2,252.2 627.4,261.8 628.0,268.0 627.7,278.5 626.2,284.0 623.3,289.2 620.9,292.8 618.0,296.2 614.2,299.6 609.5,302.5 601.0,305.8 594.8,307.2Z" fill="#f90024"/>
<path d="M592.5,306.8 582.8,306.5 576.0,304.7 568.2,301.1 561.4,296.2 555.8,289.9 553.1,285.0 552.3,282.8 551.8,279.0 551.7,271.0 553.2,264.0 556.5,256.0 560.4,249.8 565.5,243.9 570.6,239.5 574.8,236.4 583.5,231.4 587.8,229.8 592.8,228.5 598.0,227.9 601.0,228.2 603.8,229.0 607.0,230.3 610.0,232.1 615.8,237.0 621.5,244.2 624.6,251.0 627.0,260.5 627.9,268.0 627.8,276.2 627.0,281.0 625.2,285.5 620.6,292.8 616.0,297.8 611.5,301.0 607.0,303.1 600.8,305.2Z" fill="#fa0024"/>
<path d="M593.0,306.0 588.5,306.2 583.0,305.8 576.2,304.1 568.8,300.6 562.0,295.8 556.3,289.5 553.7,284.8 552.9,282.5 552.4,279.8 552.2,271.0 553.1,265.8 556.4,256.8 560.7,249.8 565.7,244.0 570.8,239.6 574.8,236.7 583.8,231.6 588.0,230.0 592.8,228.8 598.0,228.3 601.0,228.6 603.8,229.4 609.8,232.3 615.7,237.2 621.3,244.2 624.5,251.2 626.9,260.5 627.8,268.0 627.7,276.2 626.9,281.0 625.2,285.2 620.4,292.5 615.8,297.5 611.5,300.5 607.0,302.6 600.8,304.7Z" fill="#fa0041"/>
<path d="M592.2,305.5 583.2,305.2 576.5,303.5 569.2,300.1 562.5,295.4 556.9,289.2 554.3,284.5 553.5,282.2 553.0,279.5 552.6,271.0 554.0,264.0 557.0,256.2 560.8,250.0 565.8,244.2 570.9,239.8 575.0,236.8 583.8,231.9 588.0,230.3 592.8,229.1 598.0,228.6 601.0,229.0 604.5,230.0 607.5,231.4 610.8,233.4 615.6,237.5 621.2,244.5 624.4,251.2 626.7,260.5 627.7,268.0 627.6,276.2 626.9,280.8 625.0,285.2 620.2,292.3 615.8,297.1 611.2,300.2 606.8,302.2 600.8,304.1Z" fill="#f90072"/>
<path d="M593.2,304.8 589.0,304.9 583.8,304.6 577.0,303.0 569.8,299.7 563.0,294.9 557.6,289.0 554.9,284.2 554.0,282.0 553.5,279.2 553.0,271.0 553.9,265.8 557.0,257.0 561.1,250.0 566.0,244.3 571.0,240.0 575.0,237.0 584.0,232.0 588.2,230.5 592.8,229.4 598.0,229.0 601.0,229.3 604.2,230.3 607.2,231.6 610.5,233.6 615.5,237.8 621.0,244.5 624.2,251.2 626.7,260.8 627.6,268.0 627.6,276.2 626.7,281.0 625.0,285.2 620.1,292.2 615.5,296.9 611.0,299.9 606.8,301.7 600.8,303.5Z" fill="#f900a6"/>
<path d="M592.5,304.3 584.0,304.0 577.2,302.4 570.2,299.2 563.5,294.5 558.2,288.8 555.5,284.0 554.6,281.8 554.0,279.0 553.5,271.0 554.7,264.0 557.5,256.5 561.4,250.0 566.2,244.5 571.2,240.0 575.1,237.2 584.0,232.3 588.2,230.8 592.8,229.7 598.0,229.3 601.0,229.7 604.2,230.7 607.2,232.0 610.5,233.9 615.2,237.8 620.9,244.8 624.0,251.2 626.6,260.8 627.6,268.0 627.5,276.2 626.7,281.0 624.9,285.2 620.0,292.2 615.5,296.7 610.8,299.6 606.5,301.3 600.8,303.0Z" fill="#f800cc"/>
<path d="M594.5,303.5 589.8,303.7 584.2,303.4 577.5,301.8 570.8,298.7 564.0,294.0 558.6,288.2 556.0,283.7 555.1,281.5 554.5,278.8 553.9,271.0 554.6,265.8 557.5,257.2 561.6,250.2 566.2,244.7 571.3,240.2 575.0,237.6 581.5,233.7 588.5,231.0 593.0,230.0 597.8,229.7 601.0,230.1 604.2,231.1 610.5,234.2 615.1,238.0 620.7,244.8 624.0,251.5 626.5,260.8 627.5,268.0 627.5,276.2 626.7,280.8 624.9,285.2 620.0,292.2 615.5,296.5 613.0,298.2 608.5,300.2 601.0,302.4Z" fill="#f800da"/>
<path d="M593.0,303.0 584.5,302.8 577.8,301.2 571.0,298.1 564.4,293.5 559.2,288.0 556.4,283.2 555.6,281.2 555.0,278.5 554.3,270.8 555.4,264.0 558.0,256.8 561.9,250.2 566.5,244.8 571.5,240.4 575.1,237.8 581.5,234.0 588.8,231.2 593.0,230.3 597.8,230.0 600.8,230.4 604.0,231.3 610.2,234.4 615.0,238.3 620.5,244.8 623.8,251.5 626.5,260.8 627.5,268.0 627.5,276.2 626.7,280.8 624.8,285.2 619.9,292.2 615.2,296.7 610.8,299.2 608.2,300.1 600.8,301.9Z" fill="#f900ca"/>
<path d="M592.5,302.5 584.8,302.2 578.0,300.6 571.5,297.7 564.8,293.0 559.8,287.8 556.9,282.8 555.4,278.2 554.8,270.8 555.8,264.0 558.2,257.0 562.0,250.5 566.6,245.0 571.7,240.5 575.2,237.9 581.8,234.2 588.8,231.5 593.0,230.6 597.8,230.3 601.0,230.8 604.5,231.9 610.2,234.8 614.9,238.5 621.1,246.0 624.2,252.8 626.5,260.8 627.5,268.0 627.4,276.2 626.7,280.8 624.8,285.2 619.9,292.2 615.2,296.6 610.8,299.2 606.2,300.6Z" fill="#fa00a2"/>
<path d="M595.0,301.8 590.5,302.0 585.2,301.6 578.5,300.1 572.0,297.2 565.5,292.8 560.4,287.5 557.5,282.8 556.6,280.8 555.9,278.0 555.2,270.8 556.1,264.0 558.6,257.0 562.3,250.5 566.8,245.1 571.8,240.7 575.2,238.2 581.8,234.4 589.0,231.7 593.0,230.9 597.5,230.7 600.8,231.1 603.8,232.0 610.0,235.0 614.8,238.7 620.9,246.0 624.2,252.8 626.4,260.8 627.4,268.0 627.4,276.2 626.6,280.8 624.7,285.2 619.8,292.2 615.2,296.6 610.8,299.1 608.2,300.0 600.8,301.4Z" fill="#fc006f"/>
<path d="M600.8,301.3 590.8,301.4 582.5,300.5 576.5,298.7 569.8,295.1 565.5,291.9 561.8,288.1 559.4,285.0 557.1,280.5 555.7,273.2 555.6,270.8 556.0,266.0 558.4,258.0 561.2,252.5 566.5,245.8 572.2,240.6 575.8,238.1 580.8,235.2 587.8,232.3 593.0,231.2 598.0,231.0 604.2,232.5 609.8,235.2 614.5,238.8 620.1,245.0 622.7,249.2 625.4,256.8 627.2,265.2 627.4,276.0 627.1,278.5 625.6,283.5 622.5,288.8 620.0,292.0 617.0,295.0 613.0,297.9 608.2,299.9Z" fill="#fe0041"/>
<path d="M599.0,301.3 592.2,301.2 582.8,299.9 576.8,298.2 570.0,294.5 566.0,291.6 562.4,288.0 559.2,283.5 557.6,280.2 556.9,277.8 556.0,271.0 556.4,265.8 559.1,257.2 562.7,250.8 567.0,245.5 572.1,241.0 575.5,238.5 582.0,234.8 589.0,232.2 596.0,231.3 598.0,231.4 602.5,232.3 608.5,234.8 614.4,239.0 620.0,245.0 622.6,249.2 625.4,256.8 626.6,262.0 627.4,268.0 627.4,276.2 626.6,280.8 624.7,285.2 620.0,292.0 615.2,296.5 610.5,299.1 606.2,300.4Z" fill="#ff0027"/>
<path d="M595.5,301.3 592.5,301.1 583.0,299.4 577.2,297.7 573.2,295.8 566.8,291.4 562.0,286.6 559.0,282.0 558.0,280.0 557.3,277.2 556.4,270.8 556.8,265.8 559.3,257.5 562.8,251.0 567.1,245.8 572.2,241.2 575.6,238.8 582.0,235.1 589.0,232.5 596.2,231.6 602.8,232.7 606.2,234.0 609.5,235.7 614.2,239.1 620.9,246.2 624.2,253.0 626.3,260.8 627.4,268.0 627.4,276.0 626.5,280.8 624.7,285.2 619.9,292.0 615.2,296.4 610.5,299.1 606.2,300.4 600.8,301.2Z" fill="#ff0029"/>
<path d="M601.2,301.0 594.5,301.2 586.2,299.7 577.2,297.1 571.0,293.7 566.8,290.6 563.0,286.9 561.0,284.2 558.5,279.8 557.0,273.0 556.8,270.8 557.1,266.0 559.3,258.2 562.0,252.8 567.0,246.2 572.8,241.0 576.0,238.7 581.2,235.8 588.1,233.0 592.8,232.1 598.0,232.0 604.2,233.5 609.5,236.0 615.8,240.7 620.1,245.2 622.7,249.5 625.3,256.8 627.1,265.2 627.3,275.8 627.1,278.2 625.4,283.8 622.4,288.8 619.9,292.0 617.0,294.9 613.0,297.8 608.2,299.8Z" fill="#fe0045"/>
<path d="M601.0,301.1 594.8,301.2 587.8,299.9 577.5,296.5 571.3,293.2 567.2,290.2 563.4,286.5 561.5,284.0 558.9,279.5 557.4,273.0 557.2,270.8 557.5,266.0 559.5,258.5 562.2,252.8 567.2,246.2 572.8,241.2 576.0,239.0 581.2,236.0 588.2,233.2 592.8,232.4 597.8,232.3 604.0,233.8 609.2,236.1 615.8,240.8 620.0,245.2 622.6,249.5 625.3,256.8 627.1,265.2 627.3,275.8 627.0,278.2 625.4,283.8 622.4,288.8 619.9,292.0 617.0,294.9 613.0,297.8 608.2,299.8Z" fill="#fd0073"/>
<path d="M601.0,301.1 592.5,300.9 586.0,299.4 574.8,294.6 571.8,292.8 567.5,289.8 563.8,286.1 562.0,283.8 559.4,279.2 557.8,273.0 557.6,270.8 557.8,266.0 559.8,258.5 562.4,253.0 567.3,246.5 573.0,241.4 576.2,239.1 581.2,236.2 586.8,234.0 592.8,232.7 597.8,232.6 603.8,234.0 609.2,236.4 614.0,239.3 615.8,240.8 620.0,245.2 622.6,249.5 625.3,256.8 627.0,265.2 627.3,276.0 627.0,278.5 625.4,283.8 622.3,288.8 619.9,292.0 617.0,294.9 613.0,297.8 608.2,299.8Z" fill="#fc00a3"/>
<path d="M601.0,301.0 592.5,300.9 586.2,299.4 580.2,296.9 571.8,292.1 568.1,289.5 564.4,286.0 561.6,282.2 559.9,279.2 559.0,276.6 558.0,271.2 558.2,266.0 560.1,258.5 562.7,253.0 567.6,246.5 573.0,241.7 576.2,239.3 581.5,236.4 588.5,233.7 592.8,233.0 597.8,233.0 603.8,234.3 609.2,236.5 614.0,239.4 615.8,240.9 620.0,245.2 622.6,249.5 625.3,256.8 627.0,265.2 627.3,275.8 627.0,278.5 625.4,283.8 622.3,288.8 619.8,292.0 617.0,294.9 613.0,297.8 608.2,299.8Z" fill="#fc00c7"/>
<path d="M601.0,301.0 592.5,300.9 586.2,299.4 580.0,296.7 572.5,292.0 568.4,289.0 564.5,285.3 562.9,283.2 560.3,279.0 558.7,273.0 558.5,266.2 559.4,261.8 561.7,255.5 565.2,249.8 567.8,246.6 570.2,244.3 576.2,239.6 582.8,236.0 585.5,234.9 590.0,233.6 596.2,233.2 600.8,233.8 608.0,236.0 614.0,239.5 619.9,245.2 622.4,249.2 625.2,256.8 626.5,262.2 627.3,268.2 627.0,278.2 625.4,283.5 623.3,287.2 619.6,292.2 616.8,295.1 613.2,297.6 608.2,299.7Z" fill="#fc00d2"/>
<path d="M600.8,301.0 594.8,301.1 588.0,299.8 583.8,298.4 578.2,295.6 569.0,288.8 564.9,285.0 562.4,281.8 560.7,278.8 559.1,273.0 558.8,270.8 558.8,266.2 559.6,262.0 562.0,255.5 565.3,250.0 568.0,246.8 570.3,244.5 576.5,239.7 582.8,236.3 585.8,235.1 590.0,233.9 596.2,233.5 603.5,234.7 609.2,236.7 614.0,239.5 615.5,240.8 619.9,245.2 622.5,249.5 625.2,256.8 627.0,265.2 627.2,276.0 626.7,279.8 625.3,283.8 622.3,288.8 619.8,292.0 617.0,294.8 613.0,297.7 608.2,299.7Z" fill="#fc00c2"/>
<path d="M600.8,301.0 594.8,301.1 588.0,299.8 583.8,298.4 578.2,295.6 575.2,293.4 565.4,284.8 561.2,278.8 559.5,273.0 559.1,270.8 559.2,266.2 560.0,262.0 562.2,255.8 565.6,250.0 568.0,247.0 570.5,244.6 576.5,240.0 582.9,236.5 585.8,235.3 590.0,234.2 593.0,233.8 597.8,233.8 603.5,234.8 609.0,236.6 614.0,239.5 619.9,245.2 622.5,249.5 625.2,256.8 627.0,265.2 627.2,276.0 626.7,279.8 625.3,283.8 622.3,288.8 619.8,292.0 617.0,294.8 613.0,297.7 608.2,299.7Z" fill="#fd009c"/>
<path d="M600.5,301.0 592.5,300.8 586.2,299.3 580.2,296.6 575.5,293.6 565.8,284.5 563.3,281.2 561.5,278.2 560.3,274.8 559.5,271.0 559.5,266.0 561.3,258.5 563.6,253.5 568.2,247.1 573.5,242.4 580.0,238.2 585.8,235.6 589.0,234.6 593.0,234.0 597.8,233.9 605.5,235.3 609.0,236.6 614.0,239.6 615.7,241.0 619.9,245.2 622.5,249.5 625.2,256.8 627.0,265.2 627.2,276.0 626.6,279.8 625.3,283.8 622.2,288.7 619.7,292.0 617.0,294.8 613.0,297.7 608.2,299.7Z" fill="#fe006c"/>
<path d="M597.8,301.0 592.5,300.8 586.2,299.3 580.2,296.6 575.2,293.3 569.8,288.2 563.7,281.0 562.0,278.2 560.9,275.5 559.9,270.2 560.1,264.0 561.6,258.5 564.8,252.0 568.6,247.0 573.8,242.4 576.8,240.3 582.0,237.4 589.0,234.9 596.2,234.0 602.2,234.6 609.0,236.7 614.0,239.6 619.8,245.2 622.4,249.5 625.2,256.8 626.4,262.2 627.2,268.2 627.2,276.2 626.4,280.8 624.6,285.0 619.7,292.0 615.2,296.2 610.5,298.9 604.5,300.5Z" fill="#ff0041"/>
<path d="M601.2,300.8 594.8,301.0 591.0,300.5 586.2,299.2 580.2,296.6 575.5,293.5 569.9,288.2 566.5,284.2 564.0,280.8 562.3,278.0 561.4,275.5 560.3,271.0 560.2,266.0 561.8,258.8 564.0,253.8 568.5,247.5 573.8,242.7 580.2,238.6 586.0,235.9 593.0,234.3 597.8,234.0 605.5,235.4 609.2,236.8 614.0,239.6 615.5,240.9 619.8,245.2 622.4,249.5 625.2,256.8 626.9,265.2 627.2,275.8 626.9,278.2 625.4,283.5 622.2,288.7 619.7,292.0 617.0,294.8 613.0,297.6 608.2,299.6Z" fill="#ff002a"/>
<path d="M601.2,300.8 594.8,301.0 591.0,300.4 586.2,299.2 580.5,296.7 575.5,293.4 569.9,288.2 566.4,284.0 562.6,277.8 560.7,271.0 560.5,266.0 562.1,258.8 564.2,253.9 568.8,247.5 574.0,242.8 580.5,238.7 586.0,236.0 593.0,234.3 597.8,234.1 605.5,235.5 609.2,236.9 614.0,239.7 615.5,240.9 619.8,245.2 622.4,249.5 625.1,256.8 626.9,265.2 627.2,275.8 626.9,278.2 625.4,283.5 622.2,288.7 619.7,292.0 616.9,294.8 613.0,297.6 608.2,299.6Z" fill="#ff002d"/>
<path d="M601.2,300.8 594.8,301.0 591.0,300.4 586.2,299.2 580.5,296.6 575.5,293.4 569.8,288.0 565.1,282.0 562.8,277.8 561.6,274.0 561.0,270.8 560.8,266.0 562.3,259.0 564.5,254.0 569.0,247.6 574.0,243.0 577.0,240.9 582.2,237.8 589.2,235.1 593.2,234.3 597.8,234.1 605.5,235.5 609.2,236.9 614.0,239.7 615.5,241.0 619.7,245.2 622.4,249.5 625.1,256.8 626.9,265.2 627.2,275.8 626.9,278.2 625.3,283.5 622.2,288.6 619.7,292.0 616.9,294.8 613.0,297.6 608.2,299.6Z" fill="#ff0049"/>
<path d="M601.2,300.8 594.8,300.9 591.0,300.4 586.2,299.2 580.2,296.5 575.5,293.4 569.8,288.0 565.1,281.8 562.9,277.8 561.1,270.8 561.1,266.0 562.6,259.0 564.6,254.2 569.1,247.8 574.0,243.2 577.2,240.8 582.2,237.9 589.2,235.1 593.2,234.4 597.8,234.1 605.5,235.5 609.0,236.8 614.0,239.7 615.5,241.0 619.7,245.2 622.4,249.5 625.1,256.8 626.9,265.2 627.1,275.8 626.9,278.2 625.3,283.5 622.2,288.6 619.6,292.0 616.9,294.8 613.0,297.6 608.2,299.6Z" fill="#fe0074"/>
<path d="M601.0,300.8 592.5,300.7 586.2,299.1 580.2,296.4 575.5,293.3 569.9,288.0 565.1,281.8 562.8,277.5 561.3,271.0 561.2,266.2 562.6,259.2 564.8,254.2 569.3,247.8 574.2,243.1 580.5,239.0 586.2,236.1 593.2,234.4 597.8,234.2 605.5,235.5 609.0,236.8 613.8,239.6 615.5,241.0 619.7,245.2 622.3,249.5 625.1,256.8 626.9,265.2 627.1,275.8 626.9,278.2 625.3,283.5 622.2,288.6 619.6,292.0 616.9,294.8 613.0,297.6 608.2,299.6Z" fill="#fe00a2"/>
<path d="M601.0,300.8 592.5,300.7 586.2,299.1 580.2,296.4 575.5,293.3 569.9,288.0 565.2,281.8 562.9,277.5 561.3,270.8 561.3,266.0 562.8,259.0 565.9,252.5 569.3,247.8 574.2,243.2 577.2,241.0 582.2,238.0 586.2,236.2 593.2,234.4 597.8,234.2 605.5,235.6 609.0,236.8 613.8,239.6 615.5,241.0 619.7,245.2 622.3,249.5 625.1,256.8 626.9,265.2 627.1,275.8 626.8,278.2 625.3,283.5 622.2,288.6 619.6,292.0 616.9,294.8 613.0,297.6 608.2,299.6Z" fill="#fe00c3"/>
<path d="M600.8,300.8 592.5,300.6 586.2,299.0 580.2,296.3 575.7,293.2 570.1,288.0 565.4,281.8 563.1,277.5 561.5,270.8 561.5,266.2 563.1,259.2 565.1,254.5 569.5,248.0 574.2,243.5 577.3,241.2 582.5,238.1 589.2,235.4 593.2,234.6 597.8,234.4 605.5,235.7 609.0,237.0 613.8,239.7 615.5,241.2 619.5,245.2 622.2,249.5 625.0,256.9 626.8,265.2 627.0,275.8 626.8,278.2 625.2,283.5 622.2,288.5 619.5,292.0 616.8,294.7 612.9,297.5 608.1,299.5Z" fill="#000"/>
</g>
<path d="M630.6,229 C632.6,237 635.0,247 636.9,258 C638.3,268 639.7,280 640.0,296" fill="none" stroke="#b40090" stroke-width="1.3" stroke-opacity="0.85"/>
<g id="club" fill-rule="evenodd" mask="url(#cm)">
<path d="M640.8,356.8 640.1,355.2 637.3,339.8 625.7,293.0 623.7,282.0 621.4,264.5 620.7,254.5 620.9,238.5 621.8,231.5 623.7,223.0 625.9,217.0 606.0,205.3 598.3,196.5 597.5,194.8 601.2,182.8 617.8,134.3 622.8,121.8 626.7,114.2 632.8,105.7 636.7,101.5 641.6,97.5 646.4,94.5 649.3,93.2 654.8,91.9 657.8,91.9 661.1,92.5 663.8,93.5 668.2,96.0 672.5,100.2 675.0,104.4 676.6,109.8 677.4,117.0 676.9,125.5 675.6,132.8 673.8,139.7 669.9,150.2 665.7,160.0 661.0,169.2 657.3,174.8 644.7,189.0 635.4,201.0 630.1,209.2 627.9,214.8 627.9,217.5 628.3,220.0 633.3,240.2 635.5,250.8 637.5,264.0 638.5,273.8 639.6,291.2 640.0,334.8 641.2,354.0 641.1,356.2Z" fill="#0005c0"/>
<path d="M641.0,356.6 640.5,356.5 640.1,355.2 637.6,341.0 625.7,293.0 623.7,282.0 621.5,264.4 620.7,254.5 621.0,238.5 621.9,231.5 623.7,223.0 625.9,217.0 606.0,205.3 600.4,199.0 598.3,196.2 597.9,195.2 607.0,167.0 619.3,131.5 623.4,121.8 627.2,114.3 633.2,105.8 637.0,101.8 640.8,98.7 644.8,96.1 648.5,94.2 653.5,92.8 657.5,92.6 663.5,94.2 668.0,96.8 672.1,100.8 674.4,104.8 676.0,110.0 676.9,117.2 676.6,123.5 675.1,132.5 673.2,139.8 669.4,150.2 664.0,162.4 660.5,169.2 656.9,174.8 644.7,188.8 637.4,198.0 631.2,207.2 629.0,211.5 627.9,214.8 627.9,217.5 628.3,220.0 633.2,240.2 635.4,251.0 638.2,271.2 639.4,291.2 639.9,334.8 641.2,354.0Z" fill="#0006c3"/>
<path d="M640.8,356.7 639.9,354.0 637.7,341.0 625.9,293.0 623.9,282.0 621.6,264.2 620.9,254.2 621.0,238.8 622.0,231.5 623.9,222.5 626.0,217.0 606.0,205.2 600.5,199.0 598.4,196.0 607.7,167.2 619.9,132.0 624.0,122.2 627.8,114.8 633.8,106.2 637.4,102.5 641.2,99.4 645.2,96.9 649.0,95.1 652.5,94.0 657.2,93.6 663.0,95.1 667.5,97.7 671.2,101.4 673.5,105.2 675.1,110.2 676.0,117.8 675.6,125.2 674.1,133.2 672.4,139.5 668.6,150.0 663.2,162.5 660.1,168.8 656.5,174.4 644.4,188.8 635.3,200.8 630.1,209.2 627.9,214.8 627.9,217.5 628.2,220.2 632.1,236.0 635.0,249.8 636.9,262.2 638.2,274.0 639.3,291.5 639.9,334.8 641.1,354.0 641.1,356.2Z" fill="#0007c6"/>
<path d="M640.8,356.6 639.9,353.8 637.7,341.0 626.0,293.0 624.0,281.8 621.8,264.2 621.0,254.2 621.1,238.8 622.1,231.5 623.8,223.0 626.0,217.0 606.1,205.2 600.5,198.9 598.9,196.5 608.3,167.5 620.6,132.2 624.7,122.5 628.4,115.2 631.8,110.1 634.5,106.6 637.8,103.2 641.8,100.1 645.8,97.6 649.5,95.9 652.8,95.0 657.0,94.6 662.4,96.0 666.5,98.3 670.4,102.0 672.7,105.8 674.5,111.8 675.1,118.0 674.8,125.0 673.4,132.8 671.7,139.0 667.9,149.5 662.2,163.0 659.5,168.5 656.1,174.0 644.1,188.5 637.1,198.0 630.9,207.5 628.4,212.8 627.9,215.0 628.2,220.2 631.9,236.0 634.7,249.8 636.7,262.2 637.9,274.2 639.0,291.5 639.8,334.8 641.1,354.0 641.0,356.2Z" fill="#0009c4"/>
<path d="M640.8,356.6 639.9,353.8 637.7,341.0 626.2,293.0 624.2,281.8 622.0,264.2 621.2,254.2 621.3,238.8 622.2,231.5 623.8,223.0 626.0,217.0 606.1,205.2 600.5,198.8 599.5,197.0 609.0,167.8 621.3,132.5 625.3,123.0 629.0,115.5 632.2,110.6 635.0,107.2 638.2,103.8 642.2,100.8 646.1,98.5 649.8,96.8 653.2,95.9 657.0,95.7 662.0,97.0 666.2,99.4 669.9,103.0 672.4,107.5 673.9,113.5 674.3,119.2 674.0,125.0 672.4,133.5 670.9,138.8 667.1,149.2 661.4,163.0 658.3,169.2 655.5,173.8 643.9,188.2 637.0,197.8 630.9,207.5 628.4,212.8 627.8,215.0 628.2,220.2 631.8,236.0 634.5,249.8 636.4,262.5 637.7,274.2 638.8,291.5 639.8,334.8 641.1,354.0 641.0,356.0Z" fill="#000bb7"/>
<path d="M640.8,356.5 639.9,353.8 637.8,341.0 626.3,292.8 624.3,281.8 622.1,264.0 621.3,253.5 621.4,238.8 622.3,231.5 623.8,223.0 626.1,217.0 606.2,205.2 600.7,199.0 600.1,197.5 600.8,196.3 607.3,175.0 612.8,158.5 622.0,132.8 626.1,123.2 629.7,115.8 632.7,111.2 635.7,107.5 638.8,104.4 642.7,101.5 646.5,99.3 650.2,97.7 653.8,96.9 657.0,96.7 661.5,97.9 665.5,100.2 669.0,103.5 671.5,108.0 673.0,113.8 673.4,119.2 673.2,125.0 671.6,133.2 670.0,139.0 666.3,149.0 660.5,163.2 657.7,169.0 653.9,175.0 643.5,188.2 636.8,197.8 630.8,207.5 628.4,212.8 627.8,215.0 628.2,220.2 631.7,236.2 635.2,255.8 637.4,274.2 639.0,303.0 639.7,334.8 641.1,354.0Z" fill="#000ea7"/>
<path d="M640.8,356.5 640.0,353.8 637.5,339.8 626.4,292.8 624.5,281.8 622.3,264.0 621.5,253.2 621.5,238.8 622.3,231.8 623.9,223.0 626.1,217.0 606.2,205.2 602.8,201.4 600.6,198.2 601.4,196.8 607.9,175.2 613.4,159.0 618.3,146.0 622.6,133.2 630.4,116.0 634.9,109.5 638.8,105.4 641.8,103.2 645.8,100.7 649.0,99.2 653.8,97.9 657.0,97.7 661.2,98.9 666.2,102.2 669.3,105.8 671.3,110.2 672.2,114.0 672.5,123.0 671.8,128.5 670.3,135.2 664.2,152.2 659.0,165.0 657.1,168.8 653.5,174.6 643.3,188.0 636.7,197.5 630.8,207.5 628.4,212.8 627.8,215.0 628.1,220.2 631.5,236.2 634.9,255.8 637.4,277.5 638.9,303.0 639.7,335.0 641.0,354.0Z" fill="#021676"/>
<path d="M640.8,356.4 640.0,354.0 637.5,339.8 626.6,292.8 624.7,281.8 622.5,264.0 621.7,253.2 621.6,239.0 622.4,231.8 623.9,223.0 626.1,217.0 606.2,205.2 602.8,201.3 601.2,198.8 602.1,197.0 608.5,175.7 615.5,155.0 619.0,146.2 623.4,133.2 631.1,116.2 635.5,109.9 639.2,106.0 642.2,103.9 646.2,101.5 649.5,100.0 654.2,98.9 657.0,98.8 660.8,99.9 665.5,102.9 668.4,106.2 670.3,110.5 671.3,114.2 671.7,123.0 671.0,128.5 669.5,134.9 663.6,151.8 656.6,168.5 653.1,174.2 643.0,187.8 636.5,197.5 630.7,207.5 628.4,212.8 627.8,215.0 628.1,220.2 631.3,236.2 634.7,255.8 637.1,277.5 638.7,303.2 639.6,335.0 641.0,354.0Z" fill="#041d45"/>
<path d="M640.8,356.3 640.0,353.8 637.8,341.0 626.7,292.8 624.9,281.8 622.7,264.0 621.8,253.2 621.6,244.8 621.8,239.0 623.9,223.2 626.1,217.0 606.2,205.2 602.8,201.2 601.7,199.5 602.8,197.5 609.1,176.0 616.0,155.5 619.6,146.8 624.0,133.7 631.7,116.5 636.0,110.5 640.5,106.0 648.0,101.6 652.2,100.3 656.8,99.8 660.1,100.8 664.8,103.6 667.9,107.5 669.5,111.1 670.3,114.0 670.8,117.5 670.8,123.0 670.1,128.5 668.8,134.5 662.8,151.5 656.0,168.2 652.6,174.0 642.8,187.5 636.4,197.2 630.6,207.5 628.3,212.8 627.8,214.9 628.0,220.2 631.1,236.2 634.4,255.8 636.9,277.5 638.5,303.2 639.6,335.0 641.0,354.0Z" fill="#05212c"/>
<path d="M640.8,356.3 640.0,353.8 637.8,341.0 626.9,292.8 625.0,281.5 622.8,263.8 622.0,253.0 621.7,244.8 621.9,239.0 623.9,223.2 626.1,217.0 606.2,205.2 603.0,201.4 602.3,200.0 603.5,197.8 609.8,176.2 616.6,155.8 620.3,147.0 624.7,134.0 632.3,117.0 636.0,111.6 641.0,106.7 648.2,102.5 652.8,101.2 656.8,100.8 659.7,101.8 664.0,104.3 667.2,108.2 668.7,111.8 669.9,117.5 670.0,123.0 669.3,128.5 668.0,134.2 662.1,151.2 655.5,167.8 653.4,171.8 639.7,191.5 636.2,197.2 630.5,207.5 627.7,214.8 628.0,220.2 634.2,256.0 636.6,277.5 638.3,303.2 639.5,335.0 641.0,354.0Z" fill="#072418"/>
<path d="M640.8,356.2 636.5,334.8 627.0,292.8 624.9,279.8 623.0,263.8 622.1,253.0 621.8,244.8 622.0,239.0 623.9,223.2 626.2,217.0 606.2,205.1 602.9,200.8 604.2,198.0 610.4,176.5 617.3,156.0 621.0,147.3 625.4,134.2 628.0,129.0 632.9,117.2 636.5,112.1 641.5,107.3 648.2,103.5 652.5,102.3 656.2,101.9 659.0,102.6 663.2,105.1 666.2,108.6 667.8,111.8 669.0,117.5 669.2,123.0 668.8,127.0 667.3,133.8 661.4,150.8 654.9,167.5 651.7,173.2 638.1,193.5 630.5,207.5 627.7,214.8 628.0,220.2 633.9,256.0 636.3,277.5 638.1,303.2 639.5,335.0 640.9,354.0Z" fill="#08260a"/>
<path d="M640.8,356.1 636.6,334.8 627.3,293.2 625.1,279.8 623.2,263.8 622.0,245.0 622.1,239.0 623.9,223.2 626.2,217.0 606.2,205.1 605.0,203.8 603.4,201.2 604.9,198.5 611.1,176.8 617.9,156.2 621.6,147.8 626.1,134.5 628.7,129.2 633.6,117.5 637.0,112.6 642.0,107.9 648.0,104.6 653.0,103.3 656.2,102.9 658.8,103.6 662.7,106.0 665.5,109.4 667.3,113.5 668.2,117.8 668.4,123.2 667.9,127.0 666.5,133.5 660.7,150.5 657.0,159.8 656.0,163.2 654.4,167.2 652.5,171.0 638.0,193.2 630.2,207.8 627.7,214.8 627.9,220.2 633.6,256.0 636.0,277.5 637.9,303.2 639.4,335.0 640.9,354.0Z" fill="#092708"/>
<path d="M640.8,355.9 640.1,353.8 636.6,334.8 627.4,293.2 625.3,279.8 623.3,263.8 622.1,245.0 622.3,239.0 623.9,223.2 626.2,217.0 606.2,205.0 604.0,202.0 605.6,198.8 611.6,177.2 618.5,156.5 622.2,148.2 626.8,134.8 629.3,129.8 634.3,117.8 637.5,113.1 639.5,111.0 642.5,108.5 648.2,105.5 652.0,104.5 656.2,103.9 658.2,104.5 662.0,106.7 665.2,110.8 666.4,113.8 667.3,117.5 667.5,123.2 667.1,127.0 665.8,133.0 660.0,150.1 656.2,159.8 655.4,163.0 653.8,167.0 652.0,170.7 637.8,193.2 630.2,207.8 627.7,214.8 627.9,220.2 633.4,256.0 635.8,277.5 637.7,303.2 639.3,333.8 640.9,354.0Z" fill="#092706"/>
<path d="M640.8,355.7 640.1,353.8 636.6,334.8 627.6,293.2 625.4,279.8 623.5,263.8 622.2,245.0 622.4,239.0 624.0,223.2 626.2,217.0 606.3,205.0 605.2,203.8 604.7,202.5 606.2,199.2 612.3,177.5 619.2,156.8 623.0,148.5 627.4,135.2 630.1,130.0 634.9,118.0 638.0,113.6 642.8,109.3 648.2,106.5 652.2,105.5 656.2,105.0 657.8,105.5 661.3,107.5 664.3,111.2 665.4,113.8 666.4,117.5 666.7,123.2 666.3,127.0 665.1,132.8 659.2,149.9 655.3,159.8 654.6,163.0 652.4,168.5 637.6,193.0 630.2,207.8 627.7,214.8 627.9,220.2 633.1,256.0 635.5,277.8 637.5,303.2 639.2,333.8 640.9,354.0Z" fill="#0a2805"/>
<path d="M640.8,355.6 640.1,353.8 636.7,334.8 627.7,293.2 625.9,281.8 623.9,266.0 622.4,245.0 622.5,239.2 624.0,223.2 626.2,216.9 606.4,205.0 605.2,203.2 607.0,199.5 612.9,177.8 619.7,157.2 623.6,149.0 628.1,135.5 630.8,130.4 635.6,118.2 638.6,114.0 641.1,111.5 643.2,110.0 648.2,107.4 656.2,106.0 659.9,107.8 661.7,109.5 663.7,112.2 665.5,117.2 665.8,124.8 664.3,132.2 658.6,149.5 654.6,159.5 653.9,163.0 651.9,168.2 637.5,192.6 630.1,207.8 627.7,214.8 627.8,220.2 632.9,256.0 635.3,277.8 637.4,303.2 639.1,333.8 640.6,350.2Z" fill="#0d250f"/>
<path d="M640.8,355.5 640.1,353.8 638.0,341.0 627.8,293.2 626.0,282.0 624.1,266.0 623.0,253.2 622.5,242.2 624.0,223.2 626.2,216.8 609.2,206.8 606.5,205.0 605.9,204.0 607.6,200.0 613.6,178.0 620.3,157.5 624.2,149.5 628.7,136.0 631.5,130.8 636.3,118.5 639.1,114.5 641.5,112.2 643.8,110.6 648.2,108.4 656.0,107.1 659.2,108.6 660.8,110.0 663.0,113.0 664.6,117.5 665.0,124.8 663.6,132.0 657.8,149.2 653.9,159.5 653.2,163.0 651.3,168.0 637.3,192.5 630.0,207.8 627.6,214.8 627.8,220.2 632.6,256.0 635.0,277.8 637.2,303.2 639.1,333.8 640.6,350.2Z" fill="#102219"/>
<path d="M640.8,355.4 640.2,353.8 638.0,341.0 628.0,293.2 626.2,282.0 624.3,266.0 623.2,253.2 622.6,242.2 624.0,223.2 626.3,216.8 609.3,206.8 606.8,205.0 606.5,204.5 608.3,200.2 614.2,178.2 621.0,157.8 624.8,150.0 629.3,136.2 632.1,131.2 636.9,118.8 639.8,114.9 642.0,112.7 644.2,111.3 648.2,109.4 655.8,108.2 659.0,109.7 660.5,111.3 662.2,113.8 663.8,118.0 664.2,124.8 662.9,131.5 657.1,149.0 653.1,159.5 652.4,163.2 650.7,167.8 637.1,192.2 630.0,207.8 627.6,214.8 627.8,220.2 632.7,258.8 634.7,277.8 637.0,303.2 639.0,333.8 640.6,350.2Z" fill="#151e28"/>
<path d="M640.8,355.3 640.2,353.8 638.0,341.0 628.1,293.2 626.4,282.0 624.4,266.0 623.3,253.0 622.8,242.2 624.1,223.2 626.3,216.8 609.4,206.8 607.3,205.0 609.1,200.5 614.9,178.5 621.6,158.0 622.6,155.5 625.5,150.3 630.0,136.5 632.9,131.5 637.5,119.2 639.9,115.8 643.2,112.8 648.2,110.3 654.8,109.4 656.2,109.5 658.8,110.9 661.2,114.0 662.9,118.2 663.4,124.8 662.2,131.0 658.1,142.8 656.3,148.8 652.3,159.5 651.7,163.2 650.2,167.5 637.0,191.8 629.9,207.8 629.4,210.0 627.6,214.8 627.7,220.2 634.5,277.8 636.8,303.2Z" fill="#1b1b3d"/>
<path d="M640.8,355.2 640.2,353.8 638.0,341.0 628.3,293.2 626.5,282.0 624.6,266.0 622.9,242.2 624.1,223.2 626.3,216.8 609.5,206.8 608.2,205.8 608.1,205.2 609.7,201.0 615.4,179.0 622.1,158.5 623.3,155.8 626.2,150.8 630.7,136.8 633.5,132.0 638.1,119.5 640.4,116.2 643.5,113.5 648.2,111.3 654.8,110.5 657.5,111.3 658.2,111.9 660.4,114.8 662.1,118.8 662.6,124.8 661.4,130.8 657.3,142.5 655.7,148.2 651.6,159.2 651.1,163.0 649.6,167.2 636.8,191.8 629.8,207.8 629.4,210.0 627.6,214.8 627.7,220.2 633.3,268.8 635.6,292.8Z" fill="#201852"/>
<path d="M640.8,355.1 640.2,353.8 638.1,341.0 629.4,298.8 627.0,284.2 624.8,266.0 623.0,242.2 624.1,223.2 626.3,216.8 611.2,207.8 609.4,206.5 609.0,205.8 610.4,201.2 616.1,179.2 622.8,158.8 623.9,156.0 626.8,151.2 631.3,137.2 634.2,132.2 638.8,119.8 641.0,116.7 643.8,114.3 648.0,112.3 653.8,111.6 656.2,112.0 657.5,112.7 659.8,115.7 661.3,119.0 661.8,124.5 660.7,130.2 656.6,142.0 655.0,148.0 650.8,159.2 650.4,163.0 648.7,168.0 636.6,191.5 629.8,207.8 629.4,210.0 627.6,214.8 627.7,220.2 630.2,245.2 633.0,268.8 636.4,303.2Z" fill="#261567"/>
<path d="M640.8,354.8 640.2,353.8 638.1,341.0 629.5,298.8 627.2,284.2 625.0,266.0 623.2,242.2 624.1,223.2 626.4,216.8 611.4,207.8 610.0,206.8 609.8,206.2 616.7,179.5 623.4,159.0 624.6,156.2 627.5,151.5 632.0,137.5 634.9,132.8 639.3,120.2 641.2,117.5 644.0,115.0 648.0,113.2 653.2,112.6 656.0,113.0 656.8,113.5 659.2,116.8 660.5,119.5 661.0,124.5 659.9,130.0 655.8,141.8 654.2,147.8 650.0,159.2 649.7,163.0 648.2,167.8 636.4,191.2 629.7,207.8 629.3,210.0 627.5,214.8 627.4,217.8 629.9,245.2 632.7,268.5 635.2,292.8Z" fill="#2a1577"/>
<path d="M640.2,352.7 628.7,293.2 627.0,282.0 624.9,263.5 623.3,245.0 623.4,239.2 624.2,223.2 626.4,216.8 612.8,208.5 610.7,206.8 610.9,205.0 616.1,185.8 617.3,180.0 624.0,159.2 625.2,156.5 628.1,152.0 632.7,137.8 635.6,133.0 640.0,120.5 642.0,117.8 644.5,115.6 648.0,114.1 652.5,113.6 656.2,114.5 658.4,117.2 659.5,119.5 660.2,124.5 659.2,129.5 655.0,141.5 653.6,147.2 649.3,159.0 649.0,163.0 647.6,167.5 636.2,191.0 629.6,207.8 629.3,210.0 627.5,214.8 627.4,217.8 629.8,246.5 632.5,268.5 636.0,303.2 638.1,327.2 640.5,350.2ZM640.5,354.4 640.3,353.8 640.5,353.3 640.7,354.0Z" fill="#2c1685"/>
<path d="M640.2,352.6 629.8,298.8 627.5,284.2 625.0,263.5 623.4,245.0 623.5,239.2 624.2,223.2 626.4,216.8 614.3,209.2 612.5,207.0 611.8,205.0 616.8,185.8 617.9,180.2 624.7,159.5 625.8,156.9 628.7,152.5 633.3,138.2 636.3,133.5 640.7,120.8 642.5,118.2 644.8,116.3 648.0,115.0 652.2,114.7 655.7,115.5 657.7,118.0 658.6,119.8 659.4,124.5 658.4,129.2 654.2,141.2 652.8,147.0 648.6,158.8 648.4,163.0 647.1,167.2 636.0,190.8 629.7,207.5 629.3,210.0 627.5,214.8 627.4,217.8 629.6,246.5 635.8,303.2 638.0,327.2 640.5,350.2Z" fill="#2e1792"/>
<path d="M640.2,352.5 629.9,298.5 627.6,284.2 625.2,263.5 623.6,245.0 623.6,239.2 624.2,223.2 626.4,216.8 617.2,211.0 614.7,208.0 613.3,205.0 613.2,203.0 618.6,180.5 625.2,160.0 626.4,157.2 629.3,153.0 634.0,138.5 636.9,134.0 641.3,121.0 643.0,118.8 645.1,117.0 648.0,115.9 651.5,115.7 655.0,116.4 657.4,119.5 658.2,121.2 658.5,124.5 657.7,128.8 653.3,141.2 652.1,146.8 647.8,159.0 647.7,163.0 646.6,167.0 635.8,190.7 629.6,207.5 629.3,210.0 628.0,212.8 627.5,215.0 627.4,217.8 629.4,246.8 639.9,344.2 640.5,350.2Z" fill="#3118a0"/>
<path d="M640.2,352.4 630.0,298.5 627.8,284.2 625.4,263.5 623.7,245.0 623.8,239.2 624.4,226.0 624.2,223.2 626.5,216.8 621.8,214.1 618.0,211.2 617.5,209.9 616.0,208.2 614.7,205.2 614.7,200.8 619.2,180.8 625.8,160.2 627.0,157.5 630.0,153.5 634.7,138.8 637.6,134.5 641.9,121.5 643.5,119.3 645.5,117.7 648.0,116.8 651.0,116.6 654.5,117.4 656.5,119.8 657.3,121.5 657.7,124.2 657.0,128.5 652.5,141.0 651.4,146.2 647.1,158.8 647.0,163.0 646.0,166.8 635.6,190.5 630.5,205.4 629.5,207.5 629.3,210.0 628.1,212.5 627.4,215.0 627.3,217.8 629.1,246.8 635.5,303.5 637.8,327.2 639.9,344.2 640.4,350.2Z" fill="#3319ae"/>
<path d="M640.2,352.3 630.1,298.5 627.9,284.2 625.8,266.0 623.8,242.5 624.4,225.8 624.2,223.2 626.5,216.8 621.8,214.0 618.8,211.8 618.3,209.8 616.8,207.8 615.8,205.2 615.7,202.8 616.5,195.8 619.0,185.8 619.8,181.2 626.8,159.5 628.8,156.0 630.7,153.8 635.4,139.0 638.2,135.0 642.7,121.5 644.0,119.8 645.8,118.4 648.0,117.6 650.5,117.6 654.0,118.4 655.8,120.3 656.6,122.0 656.9,124.2 656.2,128.0 651.8,140.8 650.7,146.0 646.3,158.8 646.4,163.0 645.5,166.5 635.6,189.5 630.5,205.2 629.4,207.5 629.2,209.9 627.4,214.8 627.3,217.8 627.9,224.8 628.9,246.8 637.6,324.8 637.7,327.2 639.8,344.2 640.4,350.2Z" fill="#351ab8"/>
<path d="M640.2,352.2 630.3,298.5 628.1,284.2 626.0,266.0 624.0,242.5 624.5,225.8 624.2,223.5 626.5,216.8 621.8,214.0 619.6,212.2 618.8,209.5 617.5,207.5 616.7,205.2 616.7,202.8 617.8,193.8 620.4,181.5 627.4,160.0 629.3,156.5 631.3,154.2 636.0,139.5 638.9,135.5 643.3,121.8 646.0,119.1 648.0,118.4 649.8,118.5 653.5,119.4 655.1,121.0 655.8,122.2 656.1,124.2 655.5,127.6 650.8,141.0 650.0,145.5 645.5,158.8 645.7,163.0 645.0,166.2 636.6,187.0 635.4,189.2 630.4,205.2 629.4,207.5 629.2,209.8 627.4,214.8 627.3,217.8 627.8,224.8 628.7,247.0 632.6,283.5 635.1,303.5 635.1,306.0 639.8,344.2 640.4,350.2Z" fill="#361bc1"/>
<path d="M640.2,352.1 630.4,298.5 628.2,284.2 625.9,263.5 624.7,248.5 624.1,244.8 624.5,225.8 624.2,224.0 624.5,222.5 626.6,216.8 620.2,212.8 619.4,209.5 618.0,207.2 617.4,204.8 619.4,190.0 621.1,181.8 628.0,160.2 629.8,157.0 631.9,154.8 636.7,139.8 639.5,136.0 643.9,122.2 645.8,120.1 648.2,119.2 649.8,119.3 653.0,120.3 654.2,121.4 655.0,122.6 655.3,124.2 654.8,127.2 650.0,140.8 649.3,145.2 644.8,158.8 645.1,163.0 644.4,166.0 634.9,190.0 630.3,205.2 629.3,207.5 629.2,209.8 627.6,213.5 627.2,217.8 627.8,224.8 628.4,247.0 632.3,283.5 639.8,344.2Z" fill="#381cc9"/>
<path d="M640.2,351.8 630.5,298.5 628.4,284.2 626.3,266.0 624.9,248.5 624.2,244.8 624.6,225.8 624.3,224.0 624.5,222.5 626.6,216.8 620.6,213.0 619.9,209.5 618.5,207.0 618.0,204.8 621.6,182.2 628.5,160.8 630.3,157.5 632.6,155.0 637.4,140.0 640.2,136.4 644.5,122.5 646.2,120.7 648.2,120.0 652.6,121.2 653.6,122.0 654.2,123.0 654.5,124.2 654.1,126.8 649.1,140.8 648.6,144.8 644.0,159.0 644.4,163.0 643.9,165.8 636.3,186.0 634.9,189.0 630.2,205.2 629.2,207.5 629.1,210.0 627.6,213.5 627.2,217.8 627.7,224.8 628.2,247.0 632.1,283.8 639.7,344.2Z" fill="#391dd1"/>
<path d="M640.2,351.2 635.9,326.5 635.2,324.2 632.4,307.2 631.7,305.2 629.9,293.2 628.0,279.5 625.0,248.5 624.4,244.8 624.7,225.8 624.4,223.5 626.7,216.8 621.0,213.2 620.5,211.5 620.3,209.5 618.9,206.8 618.6,205.0 618.7,202.8 622.0,185.8 622.3,182.5 629.2,161.0 630.8,158.0 633.2,155.8 638.1,140.2 641.0,136.8 645.2,122.8 646.5,121.4 648.2,120.8 649.5,121.1 650.8,121.9 652.2,122.1 653.0,122.7 653.6,124.2 653.3,126.5 648.3,140.5 647.9,144.5 643.2,159.0 643.8,162.8 643.4,165.5 635.8,186.5 634.6,189.0 630.1,205.2 629.1,207.5 629.1,210.0 627.6,213.5 627.1,217.8 627.6,224.8 628.0,247.2 631.8,283.8 639.7,344.2Z" fill="#3b1dda"/>
<path d="M640.0,349.7 636.0,326.5 635.2,324.2 630.0,293.0 628.2,279.5 625.2,248.2 624.5,244.8 624.7,225.8 624.5,223.2 626.7,216.8 621.2,213.2 620.6,209.2 619.4,206.8 619.0,205.0 619.2,202.8 622.5,187.5 622.9,182.8 629.8,161.2 631.5,158.3 633.8,156.2 638.7,140.8 639.5,139.4 641.5,137.5 645.8,123.2 646.8,122.1 648.2,121.6 649.4,122.0 650.5,122.9 651.5,122.9 652.3,123.2 652.8,124.5 652.5,126.2 647.4,140.5 647.5,142.0 647.2,144.2 642.4,159.2 643.2,162.8 642.8,165.2 635.8,185.8 634.4,188.8 630.0,205.2 629.1,207.2 629.0,210.0 627.5,213.5 627.1,217.8 627.5,224.8 627.7,247.2 631.5,283.8 639.6,344.2Z" fill="#3c1ee2"/>
<path d="M639.5,346.6 636.1,326.5 635.4,324.2 632.7,307.2 632.0,305.0 629.4,287.8 626.9,265.8 625.4,248.2 624.7,244.8 624.9,225.8 624.5,223.6 626.8,216.8 621.4,213.2 621.0,209.2 619.7,206.5 619.5,205.0 619.6,203.0 623.1,187.8 623.7,182.8 630.4,161.5 632.1,158.8 634.4,156.8 639.4,141.0 640.2,139.8 642.2,138.0 646.4,123.5 648.0,122.3 649.3,123.0 650.0,124.6 651.0,123.8 651.8,123.9 652.0,124.5 651.8,126.0 649.0,134.2 646.6,140.2 646.7,142.0 646.4,144.0 641.6,159.2 642.6,163.0 642.3,165.0 635.5,185.5 634.0,188.8 629.9,205.0 628.9,207.5 629.0,209.8 627.2,214.5 627.0,217.8 627.4,224.8 627.4,245.2 627.7,250.0 631.3,284.0 639.5,344.2 639.7,346.2Z" fill="#3b1fe8"/>
</g>
<g fill="none" stroke="#02020a" stroke-linecap="round"><path d="M643.6,144.0 C639.6,149.5 633.2,160.5 628.9,171.6 C634.2,164.5 640.6,152.5 643.6,144.0Z" fill="#000" stroke-width="0.9"/><path d="M646.8,132.2 Q648.4,129.9 649.1,132.6" stroke-width="0.55" stroke-opacity="0.55"/><path d="M645.5,135.2 Q647.4,132.6 648.3,135.6" stroke-width="0.64" stroke-opacity="0.64"/><path d="M644.3,138.2 Q646.5,135.3 647.5,138.6" stroke-width="0.73" stroke-opacity="0.73"/><path d="M643.0,141.1 Q645.5,137.9 646.7,141.7" stroke-width="0.82" stroke-opacity="0.82"/><path d="M641.8,144.1 Q644.6,140.6 645.9,144.7" stroke-width="0.91" stroke-opacity="0.91"/><path d="M640.5,147.1 Q643.6,143.3 645.2,147.7" stroke-width="1.00" stroke-opacity="1.00"/><path d="M627.4,173.7 Q629.8,170.6 630.9,174.1" stroke-width="0.90" stroke-opacity="1.00"/><path d="M626.6,176.0 Q628.6,173.3 629.5,176.4" stroke-width="0.77" stroke-opacity="0.83"/><path d="M625.8,178.3 Q627.4,176.0 628.1,178.7" stroke-width="0.63" stroke-opacity="0.67"/><path d="M624.9,180.7 Q626.2,178.7 626.7,180.9" stroke-width="0.50" stroke-opacity="0.50"/></g>
<g stroke="#9999ff" stroke-width="1.2" stroke-dasharray="8.05 6.05" fill="none"><line x1="191.4" y1="361.3" x2="614.4" y2="240.0" stroke-dashoffset="3.6"/><line x1="309.0" y1="61.3" x2="191.4" y2="361.3" stroke-dashoffset="-2"/><line x1="309.0" y1="61.3" x2="486.7" y2="404.8" stroke-dashoffset="3.9"/><line x1="309.0" y1="61.3" x2="731.5" y2="-60.5" stroke-dashoffset="0"/><line x1="191.4" y1="361.3" x2="370.2" y2="706.3" stroke-dashoffset="-1.0"/><line x1="370.2" y1="706.3" x2="486.7" y2="404.8" stroke-dashoffset="0"/><line x1="370.2" y1="706.3" x2="793.2" y2="584.8" stroke-dashoffset="0"/><line x1="486.7" y1="404.8" x2="909.3" y2="283.5" stroke-dashoffset="0"/><line x1="909.3" y1="283.5" x2="793.2" y2="584.8" stroke-dashoffset="0"/><line x1="731.5" y1="-60.5" x2="909.3" y2="283.5" stroke-dashoffset="0"/><line x1="731.5" y1="-60.5" x2="614.4" y2="240.0" stroke-dashoffset="-4.5"/><linearGradient id="gf" gradientUnits="userSpaceOnUse" x1="614.4" y1="240.0" x2="793.2" y2="584.8"><stop offset="0.3235" stop-color="#9999ff"/><stop offset="0.3235" stop-color="#d6bae3"/></linearGradient><line x1="614.4" y1="240.0" x2="793.2" y2="584.8" stroke="url(#gf)" stroke-dashoffset="0"/></g>
<polygon points="367.3,706.3 370.2,703.4 373.09999999999997,706.3 370.2,709.1999999999999" fill="#ff2828"/><polygon points="483.8,404.8 486.7,401.90000000000003 489.59999999999997,404.8 486.7,407.7" fill="#ff2828"/><polygon points="906.3999999999999,283.3 909.5999999999999,280.1 912.8,283.3 909.5999999999999,286.5" fill="#0030e6"/><polygon points="790.3,584.8 793.5,581.5999999999999 796.7,584.8 793.5,588.0" fill="#0030e6"/>
<polygon points="486.7,404.8 909.3,283.5 793.2,584.8 370.2,706.3" fill="none" stroke="#ffcccc" stroke-width="1.1"/>
<line x1="551.4" y1="321.9" x2="279.0" y2="593.7" stroke="#00e6e6" stroke-width="2.2"/><polygon points="271.9,600.8 277.9,589.8 282.9,594.9" fill="#00e6e6"/><line x1="551.4" y1="321.9" x2="830.0" y2="43.0" stroke="#00e6e6" stroke-width="1.35" stroke-dasharray="4.6 3.0"/><circle cx="271.2" cy="601.8" r="2.1" fill="#00e6e6"/>
<circle cx="497" cy="380.4" r="6.8" fill="#9999ff"/>
<line x1="102" y1="743" x2="168.3" y2="743" stroke="#00e0e0" stroke-width="2"/>
<circle cx="124.3" cy="743" r="2.9" fill="#00e0e0"/>
</svg>
<div id="txt">
<div style="position:absolute;left:40px;top:45px;width:162px;height:31px;background:#ffff00"></div>
<div class="t title" style="left:47.60px;top:47.92px;font-size:21px;color:#ff0000;font-style:italic;letter-spacing:1.2px;">2.</div>
<div class="t title" style="left:67.30px;top:47.92px;font-size:21px;color:#ff0000;font-style:italic;">'</div>
<div class="t title" style="left:73.60px;top:47.92px;font-size:21px;color:#ff0000;font-style:italic;letter-spacing:0.45px;">Tangle</div>
<div class="t title" style="left:140.80px;top:47.92px;font-size:21px;color:#ff0000;font-style:italic;letter-spacing:0.42px;">Cube'</div>
<svg class="cbx" width="11" height="11" viewBox="0 0 11 11" style="position:absolute;left:227.0px;top:52.8px"><rect x="0.00" y="0.00" width="10.40" height="10.40" fill="#ffffff"/><rect x="0.00" y="0.00" width="9.60" height="9.60" fill="#808080"/><rect x="0.80" y="0.80" width="8.80" height="8.80" fill="#d4d0c8"/><rect x="0.80" y="0.80" width="8.00" height="8.00" fill="#404040"/><rect x="1.60" y="1.60" width="7.20" height="7.20" fill="#ffffff"/></svg>
<div class="t c1" style="left:240.50px;top:52.79px;font-size:11px;color:#e000e0;letter-spacing:0.15px;">Achsen</div>
<svg class="cbx" width="11" height="11" viewBox="0 0 11 11" style="position:absolute;left:295.3px;top:52.8px"><rect x="0.00" y="0.00" width="10.40" height="10.40" fill="#ffffff"/><rect x="0.00" y="0.00" width="9.60" height="9.60" fill="#808080"/><rect x="0.80" y="0.80" width="8.80" height="8.80" fill="#d4d0c8"/><rect x="0.80" y="0.80" width="8.00" height="8.00" fill="#404040"/><rect x="1.60" y="1.60" width="7.20" height="7.20" fill="#ffffff"/><path d="M2.7,5.0 L4.5,7.3 L8.0,2.7" fill="none" stroke="#000" stroke-width="1.9" stroke-linejoin="miter"/></svg>
<div class="t c2" style="left:309.10px;top:52.79px;font-size:11px;color:#e000e0;">x'-Achse</div>
<svg class="cbx" width="11" height="11" viewBox="0 0 11 11" style="position:absolute;left:226.0px;top:70.3px"><rect x="0.00" y="0.00" width="10.40" height="10.40" fill="#ffffff"/><rect x="0.00" y="0.00" width="9.60" height="9.60" fill="#808080"/><rect x="0.80" y="0.80" width="8.80" height="8.80" fill="#d4d0c8"/><rect x="0.80" y="0.80" width="8.00" height="8.00" fill="#404040"/><rect x="1.60" y="1.60" width="7.20" height="7.20" fill="#ffffff"/><path d="M2.7,5.0 L4.5,7.3 L8.0,2.7" fill="none" stroke="#000" stroke-width="1.9" stroke-linejoin="miter"/></svg>
<div class="t c3" style="left:239.70px;top:70.09px;font-size:11px;color:#cc00cc;letter-spacing:0.17px;">Koordinaten-Box</div>
<svg class="cbx" width="11" height="11" viewBox="0 0 11 11" style="position:absolute;left:239.2px;top:136.3px"><rect x="0.00" y="0.00" width="10.40" height="10.40" fill="#ffffff"/><rect x="0.00" y="0.00" width="9.60" height="9.60" fill="#808080"/><rect x="0.80" y="0.80" width="8.80" height="8.80" fill="#d4d0c8"/><rect x="0.80" y="0.80" width="8.00" height="8.00" fill="#404040"/><rect x="1.60" y="1.60" width="7.20" height="7.20" fill="#ffffff"/><path d="M2.7,5.0 L4.5,7.3 L8.0,2.7" fill="none" stroke="#000" stroke-width="1.9" stroke-linejoin="miter"/></svg>
<div class="t c4" style="left:252.60px;top:136.39px;font-size:11px;color:#cc6600;letter-spacing:0.23px;">Frontfläche (aktuell)</div>
<svg class="cbx" width="11" height="11" viewBox="0 0 11 11" style="position:absolute;left:9.6px;top:185.0px"><rect x="0.00" y="0.00" width="10.40" height="10.40" fill="#ffffff"/><rect x="0.00" y="0.00" width="9.60" height="9.60" fill="#808080"/><rect x="0.80" y="0.80" width="8.80" height="8.80" fill="#d4d0c8"/><rect x="0.80" y="0.80" width="8.00" height="8.00" fill="#404040"/><rect x="1.60" y="1.60" width="7.20" height="7.20" fill="#ffffff"/></svg>
<div class="t c5" style="left:23.70px;top:185.09px;font-size:11px;color:#00b4b4;">ein/aus</div>
<svg class="cbx" width="11" height="11" viewBox="0 0 11 11" style="position:absolute;left:6.2px;top:277.3px"><rect x="0.00" y="0.00" width="10.40" height="10.40" fill="#ffffff"/><rect x="0.00" y="0.00" width="9.60" height="9.60" fill="#808080"/><rect x="0.80" y="0.80" width="8.80" height="8.80" fill="#d4d0c8"/><rect x="0.80" y="0.80" width="8.00" height="8.00" fill="#404040"/><rect x="1.60" y="1.60" width="7.20" height="7.20" fill="#ffffff"/><path d="M2.7,5.0 L4.5,7.3 L8.0,2.7" fill="none" stroke="#000" stroke-width="1.9" stroke-linejoin="miter"/></svg>
<div class="t c6" style="left:20.30px;top:276.99px;font-size:11px;color:#00aa00;letter-spacing:0.09px;">Animation (t)</div>
<div class="t aufl" style="left:75.20px;top:217.29px;font-size:11px;color:#00c8c8;">Auflösung N = :</div>
<div style="position:absolute;left:152px;top:212px;width:32px;height:20px;box-sizing:border-box;border:1px solid #b8b8b8;background:#000"></div>
<div class="t inp" style="left:155.40px;top:217.29px;font-size:11px;color:#00c8c8;">1</div>
<div class="t mv" style="left:478.40px;top:354.29px;font-size:11px;color:#9999e6;">Move me</div>
<div class="t xa" style="left:254.70px;top:627.29px;font-size:11px;color:#00d2d2;">x'-Acse</div>
<div class="t sf" style="left:115.40px;top:723.19px;font-size:11px;color:#00dcdc;letter-spacing:0.12px;">SFactor2 = 1</div>
<div class="btn" style="left:0.2px;top:729.5px;width:63.4px;height:22.2px"></div>
<div class="t zb" style="left:13.00px;top:735.89px;font-size:11px;color:#1496aa;">Zoomin</div>
<div class="btn" style="left:201.8px;top:730.9px;width:72.2px;height:22.2px"></div>
<div class="t rb" style="left:215.60px;top:737.09px;font-size:11px;color:#202020;">Refresch</div>
<div class="t i1" style="left:876.00px;top:99.19px;font-size:11px;color:#9999ff;font-weight:bold;font-style:italic;letter-spacing:0.14px;">Intervall<sub>x</sub> = [ -3.2 ,3.2]</div>
<div class="t i2" style="left:876.00px;top:115.59px;font-size:11px;color:#9999ff;font-weight:bold;font-style:italic;letter-spacing:0.17px;">Intervall<sub>y</sub> = [ -3.2 &nbsp;, 3.2]</div>
<div class="t i3" style="left:876.00px;top:132.09px;font-size:11px;color:#9999ff;font-weight:bold;font-style:italic;letter-spacing:0.13px;">Intervall z = [ &nbsp;-3.2 , 3.2]</div>
<div class="t i4" style="left:879.40px;top:148.99px;font-size:11px;color:#9999ff;font-weight:bold;font-style:italic;">r<sub>x</sub> = 1 &nbsp;r<sub>y</sub> = 1</div>
<div class="t i5" style="left:879.40px;top:165.79px;font-size:11px;color:#9999ff;font-weight:bold;font-style:italic;word-spacing:-0.6px;">N = 1</div>
<div class="t i6" style="left:879.40px;top:183.09px;font-size:11px;color:#9999ff;font-weight:bold;font-style:italic;">α = 0.8 <svg width="8" height="5" viewBox="0 0 8 5" style="vertical-align:1.1px;margin:0 2.8px 0 3.4px"><path d="M0,2.5 H6" stroke="#9999ff" stroke-width="1.4" fill="none"/><path d="M4.6,0.6 L8,2.5 L4.6,4.4 Z" fill="#9999ff"/></svg> 126.1°</div>
<div class="t i7" style="left:879.40px;top:200.09px;font-size:11px;color:#9999ff;font-weight:bold;font-style:italic;">β = 5.3 <svg width="8" height="5" viewBox="0 0 8 5" style="vertical-align:1.1px;margin:0 2.8px 0 3.4px"><path d="M0,2.5 H6" stroke="#9999ff" stroke-width="1.4" fill="none"/><path d="M4.6,0.6 L8,2.5 L4.6,4.4 Z" fill="#9999ff"/></svg> 103.1°</div>
<div class="t i8" style="left:879.40px;top:216.79px;font-size:11px;color:#9999ff;font-weight:bold;font-style:italic;">γ = 1.6 <svg width="8" height="5" viewBox="0 0 8 5" style="vertical-align:1.1px;margin:0 2.8px 0 3.4px"><path d="M0,2.5 H6" stroke="#9999ff" stroke-width="1.4" fill="none"/><path d="M4.6,0.6 L8,2.5 L4.6,4.4 Z" fill="#9999ff"/></svg> 91.7°</div>
<div class="t i9" style="left:879.40px;top:233.29px;font-size:11px;color:#9999ff;font-weight:bold;font-style:italic;">p = 18.8%</div>
<div class="t i10" style="left:879.40px;top:250.39px;font-size:11px;color:#9999ff;font-weight:bold;font-style:italic;letter-spacing:0.16px;">Listenfärbung Typ a</div>
<div class="t cr1" style="left:800.30px;top:698.87px;font-size:11.5px;color:#40e6e6;font-weight:bold;font-style:italic;letter-spacing:0.78px;">Roman Chijner, Heidelberg 2012</div>
<div class="t cr2" style="left:800.30px;top:715.23px;font-size:10px;color:#40e6e6;font-weight:bold;font-style:italic;letter-spacing:0.65px;">Gestaltungshilfe : Werner Knobloch</div>
<div class="t eq" style="left:385.20px;top:34.30px;font-size:15px;color:#ff5a5a;-webkit-text-stroke:0.3px #ff5a5a;">x</div>
<div class="t eq" style="left:392.40px;top:31.71px;font-size:10.5px;color:#ff5a5a;-webkit-text-stroke:0.3px #ff5a5a;">4</div>
<div class="t eq" style="left:418.00px;top:34.46px;font-size:16px;color:#ff5a5a;transform:scaleX(0.92);transform-origin:0 0;-webkit-text-stroke:0.3px #ff5a5a;">5</div>
<div class="t eq" style="left:429.70px;top:34.30px;font-size:15px;color:#ff5a5a;-webkit-text-stroke:0.3px #ff5a5a;">x</div>
<div class="t eq" style="left:437.70px;top:31.71px;font-size:10.5px;color:#ff5a5a;-webkit-text-stroke:0.3px #ff5a5a;">2</div>
<div class="t eq" style="left:461.70px;top:34.30px;font-size:15px;color:#ff5a5a;-webkit-text-stroke:0.3px #ff5a5a;">y</div>
<div class="t eq" style="left:470.50px;top:31.71px;font-size:10.5px;color:#ff5a5a;-webkit-text-stroke:0.3px #ff5a5a;">4</div>
<div class="t eq" style="left:495.30px;top:34.46px;font-size:16px;color:#ff5a5a;transform:scaleX(0.92);transform-origin:0 0;-webkit-text-stroke:0.3px #ff5a5a;">5</div>
<div class="t eq" style="left:507.50px;top:34.30px;font-size:15px;color:#ff5a5a;-webkit-text-stroke:0.3px #ff5a5a;">y</div>
<div class="t eq" style="left:515.80px;top:31.71px;font-size:10.5px;color:#ff5a5a;-webkit-text-stroke:0.3px #ff5a5a;">2</div>
<div class="t eq" style="left:539.40px;top:34.30px;font-size:15px;color:#ff5a5a;-webkit-text-stroke:0.3px #ff5a5a;">z</div>
<div class="t eq" style="left:547.40px;top:31.71px;font-size:10.5px;color:#ff5a5a;-webkit-text-stroke:0.3px #ff5a5a;">4</div>
<div class="t eq" style="left:571.80px;top:34.46px;font-size:16px;color:#ff5a5a;transform:scaleX(0.92);transform-origin:0 0;-webkit-text-stroke:0.3px #ff5a5a;">5</div>
<div class="t eq" style="left:584.00px;top:34.30px;font-size:15px;color:#ff5a5a;-webkit-text-stroke:0.3px #ff5a5a;">z</div>
<div class="t eq" style="left:592.10px;top:31.71px;font-size:10.5px;color:#ff5a5a;-webkit-text-stroke:0.3px #ff5a5a;">2</div>
<div class="t eq" style="left:617.00px;top:34.46px;font-size:16px;color:#ff5a5a;transform:scaleX(0.92);transform-origin:0 0;-webkit-text-stroke:0.3px #ff5a5a;">11.8</div>
<div class="t eq" style="left:664.80px;top:34.46px;font-size:16px;color:#ff5a5a;transform:scaleX(0.92);transform-origin:0 0;-webkit-text-stroke:0.3px #ff5a5a;">0</div>
<svg width="1024" height="70" style="position:absolute;left:0;top:0" viewBox="0 0 1024 70"><g stroke="#e85050" stroke-width="0.95"><line x1="403.9" y1="43.2" x2="413.3" y2="43.2"/><line x1="481.3" y1="43.2" x2="490.6" y2="43.2"/><line x1="558.6" y1="43.2" x2="567.9" y2="43.2"/><line x1="447.95" y1="43.3" x2="457.95" y2="43.3"/><line x1="452.95" y1="38.2" x2="452.95" y2="48.5"/><line x1="525.6" y1="43.3" x2="535.6" y2="43.3"/><line x1="530.6" y1="38.2" x2="530.6" y2="48.5"/><line x1="602.3" y1="43.3" x2="612.3" y2="43.3"/><line x1="607.3" y1="38.2" x2="607.3" y2="48.5"/><line x1="649.6" y1="41.3" x2="660.0" y2="41.3"/><line x1="649.6" y1="45.2" x2="660.0" y2="45.2"/></g></svg>
</div>
</div>
</body></html>
